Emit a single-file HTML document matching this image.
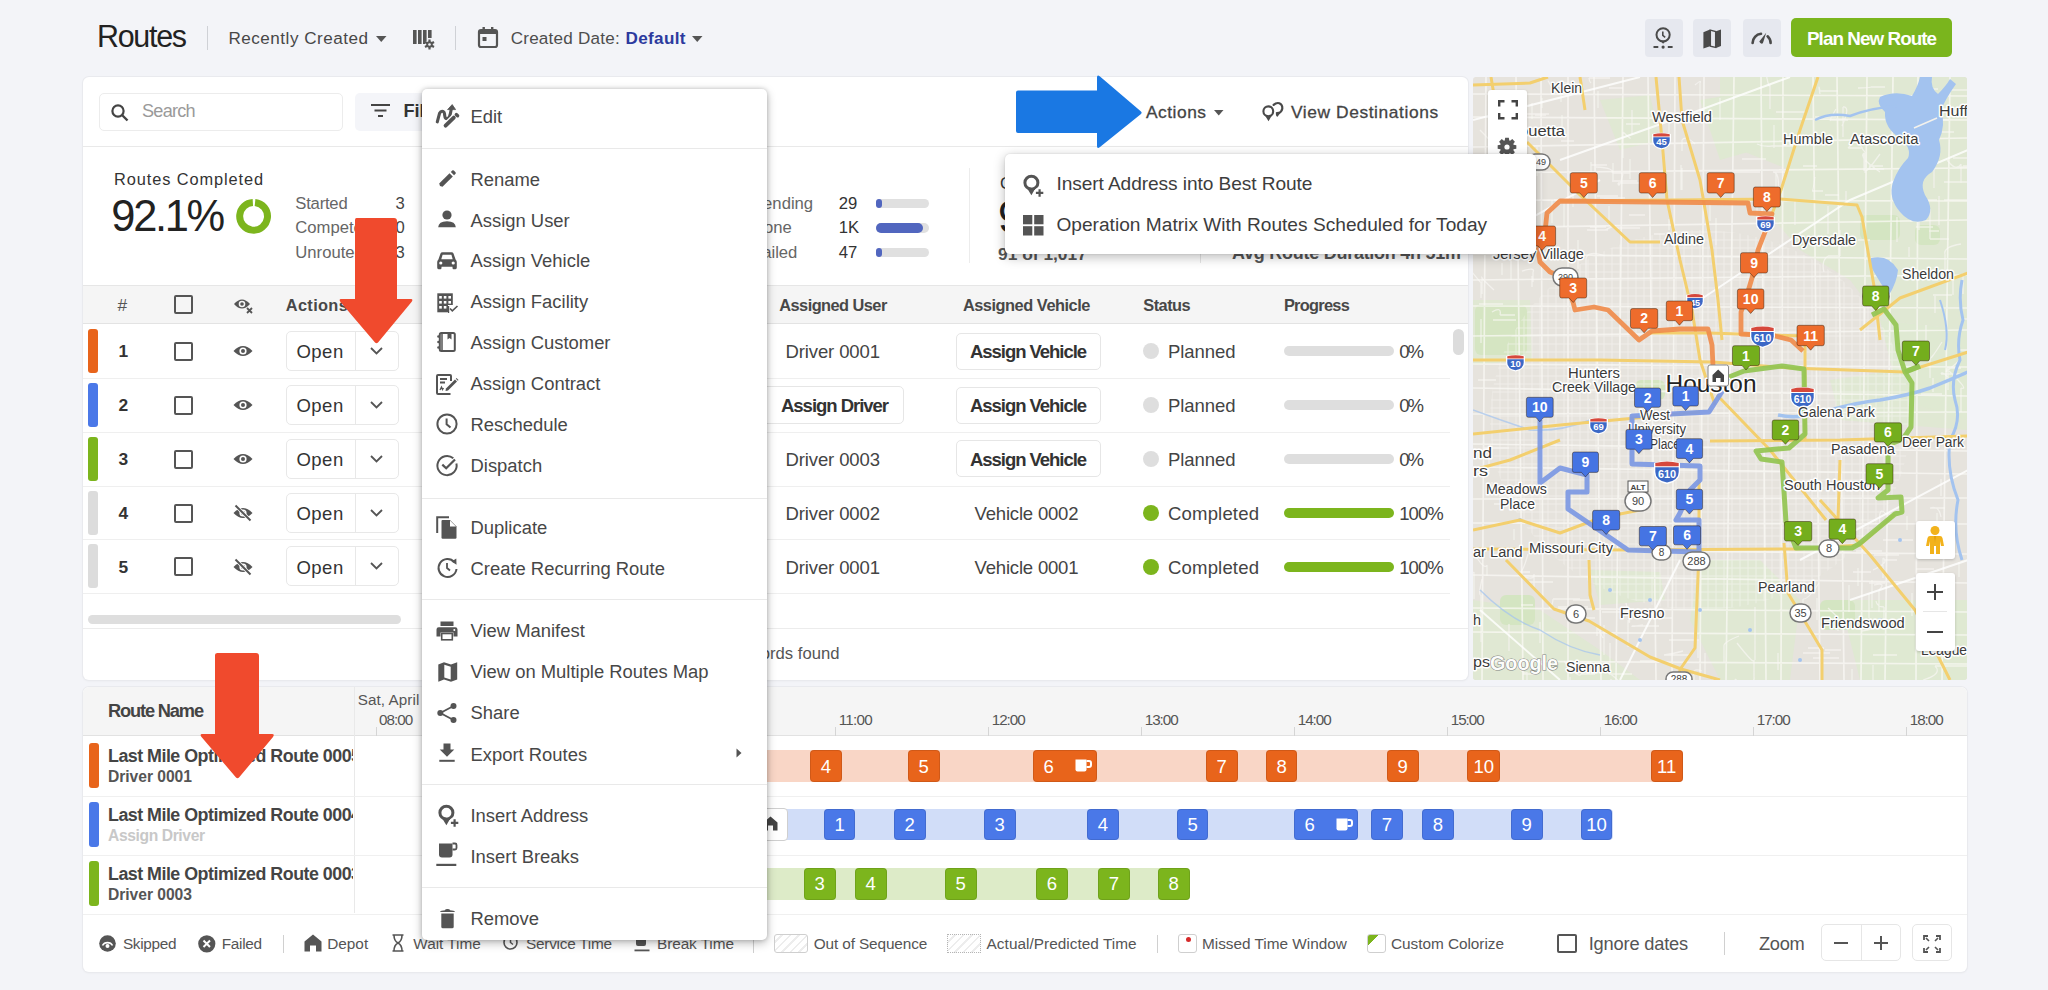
<!DOCTYPE html>
<html><head><meta charset="utf-8"><style>
html,body{margin:0;padding:0;}
body{width:2048px;height:990px;overflow:hidden;position:relative;background:#f3f4f8;font-family:"Liberation Sans",sans-serif;}
.t{position:absolute;white-space:nowrap;line-height:1.2;}
svg{overflow:visible}
</style></head><body>
<div class="t" style="left:97.0px;top:18.2px;font-size:30.43px;font-weight:400;color:#222;letter-spacing:-1.28px;">Routes</div>
<div style="position:absolute;left:207px;top:26px;width:1px;height:24px;background:#cfd1d6"></div>
<div class="t" style="left:228.5px;top:28.7px;font-size:17.1px;font-weight:400;color:#474747;letter-spacing:0.49px;">Recently Created</div>
<svg style="position:absolute;left:376px;top:36px;" width="11" height="7" viewBox="0 0 11 7"><path d="M0 0H10.5L5.25 6Z" fill="#555"/></svg>
<svg style="position:absolute;left:413px;top:29px;" width="21" height="21" viewBox="0 0 21 21"><rect x="0" y="1" width="3.6" height="14" fill="#555"/><rect x="5" y="1" width="3.6" height="14" fill="#555"/><rect x="10" y="1" width="3.6" height="14" fill="#555"/><rect x="15" y="1" width="3.6" height="8" fill="#555"/><circle cx="16.5" cy="15.5" r="4.6" fill="#f3f4f8"/><path d="M16.5 10.5V20.5M12 13L21 18M12 18L21 13" stroke="#555" stroke-width="2.2"/><circle cx="16.5" cy="15.5" r="3.2" fill="#555"/><circle cx="16.5" cy="15.5" r="1.3" fill="#f3f4f8"/></svg>
<div style="position:absolute;left:455px;top:26px;width:1px;height:24px;background:#cfd1d6"></div>
<svg style="position:absolute;left:478px;top:27px;" width="20" height="21" viewBox="0 0 20 21"><rect x="1" y="3" width="18" height="17" rx="2" fill="none" stroke="#555" stroke-width="2.2"/><rect x="1" y="3" width="18" height="4" fill="#555"/><rect x="4.5" y="0" width="2.4" height="5" fill="#555"/><rect x="13" y="0" width="2.4" height="5" fill="#555"/><rect x="4.5" y="10" width="4" height="4" fill="#555"/></svg>
<div class="t" style="left:510.7px;top:28.7px;font-size:17.1px;font-weight:400;color:#4d4d4d;letter-spacing:0.21px;">Created Date:</div>
<div class="t" style="left:625.5px;top:28.7px;font-size:17.1px;font-weight:700;color:#2c3a9e;letter-spacing:0.34px;">Default</div>
<svg style="position:absolute;left:692px;top:36px;" width="11" height="7" viewBox="0 0 11 7"><path d="M0 0H10.5L5.25 6Z" fill="#555"/></svg>
<div style="position:absolute;left:1645px;top:19px;width:38px;height:38px;background:#e6e8ef;border-radius:4px"></div>
<div style="position:absolute;left:1693px;top:19px;width:38px;height:38px;background:#e6e8ef;border-radius:4px"></div>
<div style="position:absolute;left:1743px;top:19px;width:38px;height:38px;background:#e6e8ef;border-radius:4px"></div>
<svg style="position:absolute;left:1653px;top:26px;" width="21" height="23" viewBox="0 0 21 23"><circle cx="10.1" cy="8.8" r="6.6" fill="none" stroke="#4a4a4a" stroke-width="2"/><path d="M7 14.5L10.1 17.8 13.2 14.5Z" fill="#4a4a4a"/><path d="M9.8 5.6V9.4L12.2 11.4" fill="none" stroke="#4a4a4a" stroke-width="1.6"/><path d="M0.5 21.1H5.3M14.8 21.1H19.6" stroke="#4a4a4a" stroke-width="2"/><circle cx="10.1" cy="21.1" r="1.6" fill="#4a4a4a"/></svg>
<svg style="position:absolute;left:1703px;top:28.5px;" width="19" height="20" viewBox="0 0 19 20"><path d="M0.4 3.2L7 0.6V17.2L0.4 19.6Z" fill="#4a4a4a"/><path d="M13 2.2L18 0.4V17L13 18.9Z" fill="#4a4a4a"/><path d="M7.4 1.2L12.6 2.6V18.4L7.4 17.2Z" fill="none" stroke="#4a4a4a" stroke-width="1.3"/></svg>
<svg style="position:absolute;left:1750px;top:28px;" width="24" height="18" viewBox="0 0 24 18"><path d="M2.6 15A9.2 9.2 0 0 1 11 5.8" fill="none" stroke="#4a4a4a" stroke-width="2.6" stroke-linecap="round"/><path d="M17.6 8.3A9.2 9.2 0 0 1 20.6 15" fill="none" stroke="#4a4a4a" stroke-width="2.6" stroke-linecap="round"/><path d="M9.3 13.6L16.2 4.8 12.9 15.3Q10.6 16.6 9.3 13.6Z" fill="#4a4a4a"/></svg>
<div style="position:absolute;left:1791px;top:18px;width:161px;height:39px;background:#7ab51d;border-radius:5px"></div>
<div class="t" style="left:1807.0px;top:27.6px;font-size:18.84px;font-weight:700;color:#fff;letter-spacing:-0.94px;">Plan New Route</div>
<div style="position:absolute;left:83px;top:77px;width:1385px;height:603px;background:#fff;border-radius:6px;box-shadow:0 0 0 1px #e9eaee,0 1px 3px rgba(0,0,0,.05)"></div>
<div style="position:absolute;left:99px;top:93px;width:244px;height:38px;border:1px solid #ececec;border-radius:5px;box-sizing:border-box"></div>
<svg style="position:absolute;left:111px;top:104px;" width="18" height="17" viewBox="0 0 18 17"><circle cx="7" cy="7" r="5.6" fill="none" stroke="#444" stroke-width="2.2"/><path d="M11 11L16.5 16.5" stroke="#444" stroke-width="2.4"/></svg>
<div class="t" style="left:142.0px;top:100.9px;font-size:18.12px;font-weight:400;color:#9a9a9a;letter-spacing:-0.76px;">Search</div>
<div style="position:absolute;left:355px;top:93px;width:115px;height:38px;background:#f4f5f9;border-radius:5px"></div>
<svg style="position:absolute;left:371px;top:104px;" width="19" height="14" viewBox="0 0 19 14"><path d="M0 1H19M3.5 6.5H15.5M7 12H12" stroke="#444" stroke-width="2"/></svg>
<div class="t" style="left:403.5px;top:100.9px;font-size:18.12px;font-weight:700;color:#333;letter-spacing:0.00px;">Filters</div>
<div style="position:absolute;left:83px;top:146px;width:1385px;height:1px;background:#e9e9e9"></div>
<div class="t" style="left:1146.0px;top:102.3px;font-size:17.39px;font-weight:400;color:#444;letter-spacing:0.50px;-webkit-text-stroke:0.3px #444">Actions</div>
<svg style="position:absolute;left:1214px;top:110px;" width="10" height="6" viewBox="0 0 10 6"><path d="M0 0H9.5L4.75 5.5Z" fill="#555"/></svg>
<svg style="position:absolute;left:1255px;top:97px;" width="35" height="30" viewBox="0 0 35 30"><circle cx="13.3" cy="14.3" r="4.9" fill="none" stroke="#4a4a4a" stroke-width="2.1"/><path d="M8.8 16.6L13.5 24.2 18 16.6Q13.4 21 8.8 16.6Z" fill="#4a4a4a"/><path d="M18.6 7.9Q21.3 5.4 24.3 6.2Q27.6 7.6 27.3 11.6Q26.8 14.8 23.4 16.4" fill="none" stroke="#4a4a4a" stroke-width="2.2" stroke-linecap="round"/><path d="M20.9 15.3Q23 14.5 25.6 15.2L22.8 19.6Q20.6 20.3 20.9 15.3Z" fill="#4a4a4a"/></svg>
<div class="t" style="left:1291.0px;top:102.3px;font-size:17.39px;font-weight:400;color:#444;letter-spacing:0.58px;-webkit-text-stroke:0.3px #444">View Destinations</div>
<div class="t" style="left:114.0px;top:170.0px;font-size:16.38px;font-weight:400;color:#333;letter-spacing:0.90px;">Routes Completed</div>
<div class="t" style="left:111.3px;top:190.3px;font-size:43.48px;font-weight:400;color:#222;letter-spacing:-2.32px;">92.1%</div>
<svg style="position:absolute;left:236px;top:199px;" width="36" height="36" viewBox="0 0 36 36"><circle cx="17.6" cy="17.3" r="13.9" fill="none" stroke="#7cb51d" stroke-width="7" stroke-dasharray="84.5 3" transform="rotate(-84 17.6 17.3)"/></svg>
<div class="t" style="left:295.3px;top:193.8px;font-size:16.67px;font-weight:400;color:#666;letter-spacing:-0.22px;">Started</div>
<div class="t" style="left:395.4px;top:193.8px;font-size:16.67px;font-weight:400;color:#444;letter-spacing:0.00px;">3</div>
<div class="t" style="left:295.3px;top:218.2px;font-size:16.67px;font-weight:400;color:#666;letter-spacing:0.00px;">Competed</div>
<div class="t" style="left:395.4px;top:218.2px;font-size:16.67px;font-weight:400;color:#444;letter-spacing:0.00px;">0</div>
<div class="t" style="left:295.3px;top:242.6px;font-size:16.67px;font-weight:400;color:#666;letter-spacing:0.00px;">Unrouted</div>
<div class="t" style="left:395.4px;top:242.6px;font-size:16.67px;font-weight:400;color:#444;letter-spacing:0.00px;">3</div>
<div class="t" style="left:752.0px;top:193.8px;font-size:16.67px;font-weight:400;color:#666;letter-spacing:0.00px;">Pending</div>
<div class="t" style="left:838.8px;top:193.8px;font-size:16.67px;font-weight:400;color:#333;letter-spacing:0.00px;">29</div>
<div style="position:absolute;left:875.6px;top:198.9px;width:53.799999999999955px;height:9.399999999999977px;background:#e0e0e0;border-radius:5px"></div>
<div style="position:absolute;left:875.6px;top:198.9px;width:6.0px;height:9.399999999999977px;background:#5166bf;border-radius:5px"></div>
<div class="t" style="left:752.0px;top:218.2px;font-size:16.67px;font-weight:400;color:#666;letter-spacing:0.00px;">Done</div>
<div class="t" style="left:838.8px;top:218.2px;font-size:16.67px;font-weight:400;color:#333;letter-spacing:0.00px;">1K</div>
<div style="position:absolute;left:875.6px;top:223.3px;width:53.799999999999955px;height:9.399999999999977px;background:#e0e0e0;border-radius:5px"></div>
<div style="position:absolute;left:875.6px;top:223.3px;width:47.0px;height:9.399999999999977px;background:#5166bf;border-radius:5px"></div>
<div class="t" style="left:752.0px;top:242.6px;font-size:16.67px;font-weight:400;color:#666;letter-spacing:0.00px;">Failed</div>
<div class="t" style="left:838.8px;top:242.6px;font-size:16.67px;font-weight:400;color:#333;letter-spacing:0.00px;">47</div>
<div style="position:absolute;left:875.6px;top:247.7px;width:53.799999999999955px;height:9.399999999999977px;background:#e0e0e0;border-radius:5px"></div>
<div style="position:absolute;left:875.6px;top:247.7px;width:6.0px;height:9.399999999999977px;background:#5166bf;border-radius:5px"></div>
<div style="position:absolute;left:968.5px;top:168px;width:1.0px;height:95px;background:#ececec"></div>
<div class="t" style="left:1000.0px;top:173.8px;font-size:16.67px;font-weight:400;color:#333;letter-spacing:0.00px;">Completed Destinations</div>
<div class="t" style="left:998.0px;top:191.3px;font-size:43.48px;font-weight:400;color:#222;letter-spacing:0.00px;">91.1%</div>
<div class="t" style="left:998.0px;top:243.9px;font-size:17.39px;font-weight:700;color:#555;letter-spacing:0.00px;">91 of 1,017</div>
<div style="position:absolute;left:1200px;top:248px;width:1px;height:15px;background:#e5e5e5"></div>
<div class="t" style="left:1232.0px;top:243.3px;font-size:17.97px;font-weight:700;color:#555;letter-spacing:-0.24px;">Avg Route Duration 4h 51m</div>
<div style="position:absolute;left:83px;top:285px;width:1385px;height:38.5px;background:#f5f5f5;border-top:1px solid #e6e6e6;border-bottom:1px solid #e3e3e3;box-sizing:border-box"></div>
<div class="t" style="left:117.6px;top:295.1px;font-size:17.39px;font-weight:400;color:#555;letter-spacing:0.00px;">#</div>
<div style="position:absolute;left:173.5px;top:295px;width:19.0px;height:19px;border:2px solid #555;border-radius:2px;box-sizing:border-box"></div>
<svg style="position:absolute;left:233px;top:296px;" width="21" height="18" viewBox="0 0 21 18"><path d="M1 8Q9 -1 17 8Q9 17 1 8Z" fill="#555"/><circle cx="9" cy="8" r="3.3" fill="#f5f5f5"/><circle cx="9" cy="8" r="1.8" fill="#555"/><path d="M14 12L19 17M19 12L14 17" stroke="#555" stroke-width="1.8"/></svg>
<div class="t" style="left:285.8px;top:296.0px;font-size:16.38px;font-weight:700;color:#484848;letter-spacing:0.33px;">Actions</div>
<div class="t" style="left:779.3px;top:296.0px;font-size:16.38px;font-weight:700;color:#484848;letter-spacing:-0.55px;">Assigned User</div>
<div class="t" style="left:962.9px;top:296.0px;font-size:16.38px;font-weight:700;color:#484848;letter-spacing:-0.47px;">Assigned Vehicle</div>
<div class="t" style="left:1143.3px;top:296.0px;font-size:16.38px;font-weight:700;color:#484848;letter-spacing:-0.52px;">Status</div>
<div class="t" style="left:1283.9px;top:296.0px;font-size:16.38px;font-weight:700;color:#484848;letter-spacing:-0.71px;">Progress</div>
<div style="position:absolute;left:83px;top:377.85px;width:1367px;height:1.0px;background:#efefef"></div>
<div style="position:absolute;left:88px;top:329.0px;width:10px;height:44.0px;background:#e8641b;border-radius:3px"></div>
<div class="t" style="left:118.6px;top:341.4px;font-size:17.39px;font-weight:700;color:#333;letter-spacing:0.00px;">1</div>
<div style="position:absolute;left:174px;top:342.0px;width:19px;height:19.0px;border:2px solid #555;border-radius:2px;box-sizing:border-box"></div>
<svg style="position:absolute;left:233px;top:343.3px;" width="20" height="16" viewBox="0 0 20 16"><path d="M0.5 8Q10 -2 19.5 8Q10 18 0.5 8Z" fill="#555"/><circle cx="10" cy="8" r="3.6" fill="#fff"/><circle cx="10" cy="8" r="2" fill="#555"/></svg>
<div style="position:absolute;left:286px;top:331.0px;width:112.5px;height:40.0px;border:1px solid #e8e8e8;border-radius:5px;box-sizing:border-box"></div>
<div style="position:absolute;left:355px;top:331.0px;width:1px;height:40.0px;background:#e8e8e8"></div>
<div class="t" style="left:296.5px;top:341.3px;font-size:18.55px;font-weight:400;color:#333;letter-spacing:0.45px;">Open</div>
<svg style="position:absolute;left:370px;top:347.0px;" width="13" height="8" viewBox="0 0 13 8"><path d="M1 1L6.5 6.5 12 1" fill="none" stroke="#555" stroke-width="1.8"/></svg>
<div class="t" style="left:785.5px;top:341.3px;font-size:18.55px;font-weight:400;color:#444;letter-spacing:-0.13px;">Driver 0001</div>
<div style="position:absolute;left:955.6px;top:332.7px;width:145.10000000000002px;height:37.10000000000002px;border:1px solid #e6e6e6;border-radius:5px;box-sizing:border-box"></div>
<div class="t" style="left:970.0px;top:341.3px;font-size:18.55px;font-weight:700;color:#333;letter-spacing:-1.06px;">Assign Vehicle</div>
<div style="position:absolute;left:1143px;top:343.3px;width:16px;height:16.0px;background:#dedede;border-radius:50%"></div>
<div class="t" style="left:1168.0px;top:341.3px;font-size:18.55px;font-weight:400;color:#444;letter-spacing:-0.07px;">Planned</div>
<div style="position:absolute;left:1283.6px;top:346.3px;width:110.20000000000005px;height:10.0px;background:#dedede;border-radius:5px"></div>
<div class="t" style="left:1399.3px;top:341.3px;font-size:18.55px;font-weight:400;color:#444;letter-spacing:-2.10px;">0%</div>
<div style="position:absolute;left:83px;top:431.70000000000005px;width:1367px;height:1.0px;background:#efefef"></div>
<div style="position:absolute;left:88px;top:382.85px;width:10px;height:44.0px;background:#4a78e8;border-radius:3px"></div>
<div class="t" style="left:118.6px;top:395.2px;font-size:17.39px;font-weight:700;color:#333;letter-spacing:0.00px;">2</div>
<div style="position:absolute;left:174px;top:395.85px;width:19px;height:19.0px;border:2px solid #555;border-radius:2px;box-sizing:border-box"></div>
<svg style="position:absolute;left:233px;top:397.15000000000003px;" width="20" height="16" viewBox="0 0 20 16"><path d="M0.5 8Q10 -2 19.5 8Q10 18 0.5 8Z" fill="#555"/><circle cx="10" cy="8" r="3.6" fill="#fff"/><circle cx="10" cy="8" r="2" fill="#555"/></svg>
<div style="position:absolute;left:286px;top:384.85px;width:112.5px;height:40.0px;border:1px solid #e8e8e8;border-radius:5px;box-sizing:border-box"></div>
<div style="position:absolute;left:355px;top:384.85px;width:1px;height:40.0px;background:#e8e8e8"></div>
<div class="t" style="left:296.5px;top:395.1px;font-size:18.55px;font-weight:400;color:#333;letter-spacing:0.45px;">Open</div>
<svg style="position:absolute;left:370px;top:400.85px;" width="13" height="8" viewBox="0 0 13 8"><path d="M1 1L6.5 6.5 12 1" fill="none" stroke="#555" stroke-width="1.8"/></svg>
<div style="position:absolute;left:740px;top:386.35px;width:163.60000000000002px;height:37.89999999999998px;border:1px solid #e6e6e6;border-radius:5px;box-sizing:border-box;background:#fff"></div>
<div class="t" style="left:781.0px;top:395.1px;font-size:18.55px;font-weight:700;color:#333;letter-spacing:-1.04px;">Assign Driver</div>
<div style="position:absolute;left:955.6px;top:386.55px;width:145.10000000000002px;height:37.10000000000002px;border:1px solid #e6e6e6;border-radius:5px;box-sizing:border-box"></div>
<div class="t" style="left:970.0px;top:395.1px;font-size:18.55px;font-weight:700;color:#333;letter-spacing:-1.06px;">Assign Vehicle</div>
<div style="position:absolute;left:1143px;top:397.15000000000003px;width:16px;height:16.0px;background:#dedede;border-radius:50%"></div>
<div class="t" style="left:1168.0px;top:395.1px;font-size:18.55px;font-weight:400;color:#444;letter-spacing:-0.07px;">Planned</div>
<div style="position:absolute;left:1283.6px;top:400.15000000000003px;width:110.20000000000005px;height:10.0px;background:#dedede;border-radius:5px"></div>
<div class="t" style="left:1399.3px;top:395.1px;font-size:18.55px;font-weight:400;color:#444;letter-spacing:-2.10px;">0%</div>
<div style="position:absolute;left:83px;top:485.55px;width:1367px;height:1.0px;background:#efefef"></div>
<div style="position:absolute;left:88px;top:436.7px;width:10px;height:44.0px;background:#7cb51d;border-radius:3px"></div>
<div class="t" style="left:118.6px;top:449.1px;font-size:17.39px;font-weight:700;color:#333;letter-spacing:0.00px;">3</div>
<div style="position:absolute;left:174px;top:449.7px;width:19px;height:19.0px;border:2px solid #555;border-radius:2px;box-sizing:border-box"></div>
<svg style="position:absolute;left:233px;top:451.0px;" width="20" height="16" viewBox="0 0 20 16"><path d="M0.5 8Q10 -2 19.5 8Q10 18 0.5 8Z" fill="#555"/><circle cx="10" cy="8" r="3.6" fill="#fff"/><circle cx="10" cy="8" r="2" fill="#555"/></svg>
<div style="position:absolute;left:286px;top:438.7px;width:112.5px;height:40.0px;border:1px solid #e8e8e8;border-radius:5px;box-sizing:border-box"></div>
<div style="position:absolute;left:355px;top:438.7px;width:1px;height:40.0px;background:#e8e8e8"></div>
<div class="t" style="left:296.5px;top:449.0px;font-size:18.55px;font-weight:400;color:#333;letter-spacing:0.45px;">Open</div>
<svg style="position:absolute;left:370px;top:454.7px;" width="13" height="8" viewBox="0 0 13 8"><path d="M1 1L6.5 6.5 12 1" fill="none" stroke="#555" stroke-width="1.8"/></svg>
<div class="t" style="left:785.5px;top:449.0px;font-size:18.55px;font-weight:400;color:#444;letter-spacing:-0.13px;">Driver 0003</div>
<div style="position:absolute;left:955.6px;top:440.4px;width:145.10000000000002px;height:37.10000000000002px;border:1px solid #e6e6e6;border-radius:5px;box-sizing:border-box"></div>
<div class="t" style="left:970.0px;top:449.0px;font-size:18.55px;font-weight:700;color:#333;letter-spacing:-1.06px;">Assign Vehicle</div>
<div style="position:absolute;left:1143px;top:451.0px;width:16px;height:16.0px;background:#dedede;border-radius:50%"></div>
<div class="t" style="left:1168.0px;top:449.0px;font-size:18.55px;font-weight:400;color:#444;letter-spacing:-0.07px;">Planned</div>
<div style="position:absolute;left:1283.6px;top:454.0px;width:110.20000000000005px;height:10.0px;background:#dedede;border-radius:5px"></div>
<div class="t" style="left:1399.3px;top:449.0px;font-size:18.55px;font-weight:400;color:#444;letter-spacing:-2.10px;">0%</div>
<div style="position:absolute;left:83px;top:539.4px;width:1367px;height:1.0px;background:#efefef"></div>
<div style="position:absolute;left:88px;top:490.55px;width:10px;height:43.99999999999994px;background:#dcdcdc;border-radius:3px"></div>
<div class="t" style="left:118.6px;top:502.9px;font-size:17.39px;font-weight:700;color:#333;letter-spacing:0.00px;">4</div>
<div style="position:absolute;left:174px;top:503.55px;width:19px;height:18.999999999999943px;border:2px solid #555;border-radius:2px;box-sizing:border-box"></div>
<svg style="position:absolute;left:233px;top:503.85px;" width="20" height="18" viewBox="0 0 20 18"><path d="M0.5 9Q10 -1 19.5 9Q10 19 0.5 9Z" fill="#555"/><circle cx="10" cy="9" r="3.6" fill="#fff"/><circle cx="10" cy="9" r="2" fill="#555"/><path d="M2.5 1.5L17.5 16.5" stroke="#fff" stroke-width="3.5"/><path d="M2.5 1.5L17.5 16.5" stroke="#555" stroke-width="2"/></svg>
<div style="position:absolute;left:286px;top:492.55px;width:112.5px;height:39.99999999999994px;border:1px solid #e8e8e8;border-radius:5px;box-sizing:border-box"></div>
<div style="position:absolute;left:355px;top:492.55px;width:1px;height:39.99999999999994px;background:#e8e8e8"></div>
<div class="t" style="left:296.5px;top:502.8px;font-size:18.55px;font-weight:400;color:#333;letter-spacing:0.45px;">Open</div>
<svg style="position:absolute;left:370px;top:508.55px;" width="13" height="8" viewBox="0 0 13 8"><path d="M1 1L6.5 6.5 12 1" fill="none" stroke="#555" stroke-width="1.8"/></svg>
<div class="t" style="left:785.5px;top:502.8px;font-size:18.55px;font-weight:400;color:#444;letter-spacing:-0.13px;">Driver 0002</div>
<div class="t" style="left:974.5px;top:502.8px;font-size:18.55px;font-weight:400;color:#444;letter-spacing:-0.19px;">Vehicle 0002</div>
<div style="position:absolute;left:1143px;top:504.85px;width:16px;height:16.0px;background:#7cb51d;border-radius:50%"></div>
<div class="t" style="left:1168.0px;top:502.8px;font-size:18.55px;font-weight:400;color:#444;letter-spacing:0.17px;">Completed</div>
<div style="position:absolute;left:1283.6px;top:507.85px;width:110.20000000000005px;height:10.0px;background:#7cb51d;border-radius:5px"></div>
<div class="t" style="left:1399.3px;top:502.8px;font-size:18.55px;font-weight:400;color:#444;letter-spacing:-1.00px;">100%</div>
<div style="position:absolute;left:83px;top:593.25px;width:1367px;height:1.0px;background:#efefef"></div>
<div style="position:absolute;left:88px;top:544.4px;width:10px;height:44.0px;background:#dcdcdc;border-radius:3px"></div>
<div class="t" style="left:118.6px;top:556.8px;font-size:17.39px;font-weight:700;color:#333;letter-spacing:0.00px;">5</div>
<div style="position:absolute;left:174px;top:557.4px;width:19px;height:19.0px;border:2px solid #555;border-radius:2px;box-sizing:border-box"></div>
<svg style="position:absolute;left:233px;top:557.6999999999999px;" width="20" height="18" viewBox="0 0 20 18"><path d="M0.5 9Q10 -1 19.5 9Q10 19 0.5 9Z" fill="#555"/><circle cx="10" cy="9" r="3.6" fill="#fff"/><circle cx="10" cy="9" r="2" fill="#555"/><path d="M2.5 1.5L17.5 16.5" stroke="#fff" stroke-width="3.5"/><path d="M2.5 1.5L17.5 16.5" stroke="#555" stroke-width="2"/></svg>
<div style="position:absolute;left:286px;top:546.4px;width:112.5px;height:40.0px;border:1px solid #e8e8e8;border-radius:5px;box-sizing:border-box"></div>
<div style="position:absolute;left:355px;top:546.4px;width:1px;height:40.0px;background:#e8e8e8"></div>
<div class="t" style="left:296.5px;top:556.7px;font-size:18.55px;font-weight:400;color:#333;letter-spacing:0.45px;">Open</div>
<svg style="position:absolute;left:370px;top:562.4px;" width="13" height="8" viewBox="0 0 13 8"><path d="M1 1L6.5 6.5 12 1" fill="none" stroke="#555" stroke-width="1.8"/></svg>
<div class="t" style="left:785.5px;top:556.7px;font-size:18.55px;font-weight:400;color:#444;letter-spacing:-0.13px;">Driver 0001</div>
<div class="t" style="left:974.5px;top:556.7px;font-size:18.55px;font-weight:400;color:#444;letter-spacing:-0.19px;">Vehicle 0001</div>
<div style="position:absolute;left:1143px;top:558.6999999999999px;width:16px;height:16.0px;background:#7cb51d;border-radius:50%"></div>
<div class="t" style="left:1168.0px;top:556.7px;font-size:18.55px;font-weight:400;color:#444;letter-spacing:0.17px;">Completed</div>
<div style="position:absolute;left:1283.6px;top:561.6999999999999px;width:110.20000000000005px;height:10.0px;background:#7cb51d;border-radius:5px"></div>
<div class="t" style="left:1399.3px;top:556.7px;font-size:18.55px;font-weight:400;color:#444;letter-spacing:-1.00px;">100%</div>
<div style="position:absolute;left:1452.7px;top:329px;width:10.899999999999864px;height:26px;background:#dcdcdc;border-radius:6px"></div>
<div style="position:absolute;left:88px;top:614.6px;width:313px;height:9.100000000000023px;background:#dedede;border-radius:5px"></div>
<div style="position:absolute;left:83px;top:628px;width:1385px;height:1px;background:#ececec"></div>
<div class="t" style="left:691.3px;top:643.8px;font-size:16.67px;font-weight:400;color:#555;letter-spacing:0.00px;">5 of 5 records found</div>
<svg style="position:absolute;left:1473px;top:77px;border-radius:3px;overflow:hidden" width="494" height="603" viewBox="1473 77 494 603"><rect x="1473" y="77" width="494" height="603" fill="#e6e3dd"/><polygon points="1600,100 1650,95 1660,140 1620,150" fill="#e0e8d3"/><polygon points="1720,77 1968,77 1968,330 1880,320 1850,280 1800,250 1770,215 1790,170 1740,150 1720,110" fill="#e0e8d3"/><polygon points="1473,300 1530,300 1532,360 1473,365" fill="#e0e8d3"/><polygon points="1473,600 1540,610 1600,650 1640,680 1473,680" fill="#e0e8d3"/><polygon points="1700,560 1760,560 1800,600 1790,680 1720,680 1690,620" fill="#e0e8d3"/><polygon points="1830,380 1968,360 1968,430 1840,420" fill="#e0e8d3"/><polygon points="1590,570 1660,572 1665,600 1600,605" fill="#e0e8d3"/><polygon points="1880,320 1968,330 1968,420 1900,400" fill="#dfe9d2"/><polygon points="1840,600 1968,600 1968,680 1860,680" fill="#dfe9d2"/><polygon points="1700,100 1760,90 1790,140 1720,160" fill="#dfe9d2"/><rect x="1475" y="305" width="52" height="50" rx="6" fill="#d5e5c2"/><rect x="1860" y="215" width="40" height="25" rx="6" fill="#d5e5c2"/><rect x="1915" y="225" width="25" height="20" rx="6" fill="#d5e5c2"/><rect x="1635" y="380" width="30" height="20" rx="6" fill="#d5e5c2"/><rect x="1820" y="600" width="35" height="30" rx="6" fill="#d5e5c2"/><rect x="1500" y="595" width="35" height="30" rx="6" fill="#d5e5c2"/><defs><clipPath id="core"><ellipse cx="1700" cy="420" rx="210" ry="190"/></clipPath></defs><path d="M1476 77V680 M1484 77V680 M1492 77V680 M1500 77V680 M1508 77V680 M1516 77V680 M1524 77V680 M1532 77V680 M1540 77V680 M1548 77V680 M1556 77V680 M1564 77V680 M1572 77V680 M1580 77V680 M1588 77V680 M1596 77V680 M1604 77V680 M1612 77V680 M1620 77V680 M1628 77V680 M1636 77V680 M1644 77V680 M1652 77V680 M1660 77V680 M1668 77V680 M1676 77V680 M1684 77V680 M1692 77V680 M1700 77V680 M1708 77V680 M1716 77V680 M1724 77V680 M1732 77V680 M1740 77V680 M1748 77V680 M1756 77V680 M1764 77V680 M1772 77V680 M1780 77V680 M1788 77V680 M1796 77V680 M1804 77V680 M1812 77V680 M1820 77V680 M1828 77V680 M1836 77V680 M1844 77V680 M1852 77V680 M1860 77V680 M1868 77V680 M1876 77V680 M1884 77V680 M1892 77V680 M1900 77V680 M1908 77V680 M1916 77V680 M1924 77V680 M1932 77V680 M1940 77V680 M1948 77V680 M1956 77V680 M1964 77V680 M1473 80H1968 M1473 88H1968 M1473 96H1968 M1473 104H1968 M1473 112H1968 M1473 120H1968 M1473 128H1968 M1473 136H1968 M1473 144H1968 M1473 152H1968 M1473 160H1968 M1473 168H1968 M1473 176H1968 M1473 184H1968 M1473 192H1968 M1473 200H1968 M1473 208H1968 M1473 216H1968 M1473 224H1968 M1473 232H1968 M1473 240H1968 M1473 248H1968 M1473 256H1968 M1473 264H1968 M1473 272H1968 M1473 280H1968 M1473 288H1968 M1473 296H1968 M1473 304H1968 M1473 312H1968 M1473 320H1968 M1473 328H1968 M1473 336H1968 M1473 344H1968 M1473 352H1968 M1473 360H1968 M1473 368H1968 M1473 376H1968 M1473 384H1968 M1473 392H1968 M1473 400H1968 M1473 408H1968 M1473 416H1968 M1473 424H1968 M1473 432H1968 M1473 440H1968 M1473 448H1968 M1473 456H1968 M1473 464H1968 M1473 472H1968 M1473 480H1968 M1473 488H1968 M1473 496H1968 M1473 504H1968 M1473 512H1968 M1473 520H1968 M1473 528H1968 M1473 536H1968 M1473 544H1968 M1473 552H1968 M1473 560H1968 M1473 568H1968 M1473 576H1968 M1473 584H1968 M1473 592H1968 M1473 600H1968 M1473 608H1968 M1473 616H1968 M1473 624H1968 M1473 632H1968 M1473 640H1968 M1473 648H1968 M1473 656H1968 M1473 664H1968 M1473 672H1968" stroke="#f8f7f3" stroke-width="1" opacity="0.55" clip-path="url(#core)"/><path d="M1930 358v20 M1930 358q0 3 12 -16 M1623 132v26 M1623 132q10 9 6 5 M1551 86h21 M1551 86q-5 -9 -1 -2 M1611 679v30 M1629 215h16 M1664 655h27 M1664 655q8 -1 19 -4 M1858 240h12 M1848 148h15 M1848 148q6 -6 2 -2 M1578 240v29 M1911 204v18 M1523 674h14 M1509 131h22 M1948 369v21 M1948 369q-7 8 13 -10 M1939 196v29 M1682 140v11 M1682 140q4 -5 13 4 M1618 183h24 M1618 183q1 7 5 -9 M1927 200h10 M1503 183v17 M1503 183q-3 8 19 6 M1542 98v10 M1950 90h23 M1631 680v12 M1919 521v24 M1919 602v18 M1774 125v23 M1514 529v11 M1929 231h10 M1573 179v28 M1914 274h23 M1872 628h28 M1630 159v20 M1825 650h16 M1609 206v18 M1959 350h11 M1494 504h21 M1482 159h19 M1591 162v11 M1873 655h24 M1561 83v19 M1561 83q-5 -3 8 1 M1922 130v29 M1922 130q-1 3 16 -5 M1755 607v26 M1795 201v24 M1828 206v28 M1632 626h27 M1632 626q-1 1 11 -1 M1487 565v11 M1487 565q-3 6 -14 -14 M1941 374h29 M1941 374q1 -4 9 6 M1919 203v27 M1757 198v21 M1487 662h20 M1815 117h21 M1930 239h19 M1877 620h20 M1877 620q2 9 -15 11 M1484 194v15 M1597 196h21 M1552 200v23 M1897 217v25 M1930 209v30 M1930 209q-5 5 -10 -16 M1864 153v18 M1864 153q-6 4 16 19 M1812 191h11 M1812 191q1 0 3 -14 M1564 200v27 M1520 114h29 M1770 85v24 M1770 85q-1 5 -4 -12 M1481 616v26 M1959 562v15 M1858 568v18 M1831 120h17 M1831 120q-3 3 5 -11 M1941 479v17 M1968 464v24 M1484 448h25 M1498 195h18 M1498 195q8 1 0 19 M1754 677v23 M1754 677q2 5 -18 17 M1776 112h29 M1828 256h10 M1828 256q-7 5 -4 16 M1843 107v30 M1843 107q8 -1 -1 19 M1937 513v19 M1772 146h22 M1772 146q-9 1 -15 -2 M1736 679v29 M1736 679q-8 8 11 5 M1846 191v15 M1908 101h11 M1782 139h21 M1782 139q4 1 5 -5 M1710 204v17 M1510 149v26 M1963 273v21 M1521 605h12 M1511 206h23 M1613 163v17 M1755 631v29 M1871 261h16 M1916 227h17 M1909 247v10 M1754 660v23 M1754 660q1 6 -17 -17 M1838 619v12 M1838 619q5 3 -10 -11 M1640 661h23 M1926 325v27 M1872 580v28 M1681 165v25 M1556 200h18 M1502 263v12 M1562 115v19 M1491 143h14 M1491 143q4 2 -11 -13 M1612 181h25 M1602 612h28 M1947 368h14 M1609 674h23 M1609 674q-1 -3 12 9 M1773 172h13 M1773 172q7 0 5 20 M1474 572v27 M1474 572q-5 4 -16 -1 M1705 653v22 M1927 132h27 M1733 172h27 M1511 261v19 M1813 141h18 M1479 304h24 M1700 83v30 M1700 83q2 -4 -5 2 M1600 198h25 M1519 162v12 M1518 214h13 M1509 632v19 M1853 572h18 M1481 319v24 M1482 277v17 M1482 277q-2 0 12 13 M1776 172v25 M1961 388v24 M1961 388q9 3 -12 -17 M1933 295h19 M1540 622v21 M1604 625v30 M1534 574v16 M1534 574q1 7 -13 2 M1511 96v14 M1871 87h14 M1871 87q-2 1 -13 1 M1492 482v13 M1713 677v27 M1921 394h21 M1632 110v25 M1508 152v19 M1499 496h21 M1669 219v11 M1803 599v18 M1803 599q5 1 16 -16 M1865 152v21 M1865 152q-5 -4 -7 -17 M1916 569h18 M1496 96h28 M1935 666h19 M1935 666q8 8 -12 14 M1558 607h30 M1568 608h11 M1628 620v27 M1628 620q4 9 -2 -17 M1825 195h14 M1864 302v23 M1586 258v29 M1586 258q3 -8 19 -2 M1614 228h26 M1614 228q5 -5 -9 2 M1565 618h30 M1933 378v14 M1944 182h26 M1856 551h26 M1720 98v22 M1905 186h13 M1509 624v21 M1591 165h16 M1517 572h13 M1517 572q4 7 11 -18 M1580 662h11 M1961 164v19 M1961 164q-5 8 -14 -4 M1511 98v30 M1587 230h21 M1935 296v17 M1493 320h23 M1817 598v22 M1554 200h14 M1694 676v24 M1694 676q-2 -9 8 -5 M1609 88h14 M1930 508h15 M1930 508q9 -3 11 9 M1922 89h16 M1922 89q8 -3 11 1 M1500 315h15 M1500 315q2 -9 -8 -3 M1742 159h24 M1803 166h14 M1902 213h16 M1902 213q-9 -10 5 3 M1873 665v16 M1803 653h27 M1667 113h18 M1612 173h18 M1612 173q3 -5 -16 -6 M1682 168v22 M1820 91h18 M1820 91q-2 -9 -0 3 M1598 91v17 M1778 653v17 M1884 607v18 M1884 607q-7 0 -8 -6 M1957 167h14 M1589 78h21 M1589 78q-0 3 2 5 M1953 278v17 M1813 658h26 M1590 227h16 M1535 115h11 M1553 599h27 M1553 599q0 6 -4 9 M1849 585v27 M1884 560h13 M1587 188v10 M1953 158h24 M1669 640h30 M1532 103v16 M1532 276v11 M1869 583h16 M1852 669v18 M1869 166h14 M1533 272v10 M1533 272q3 -5 -11 -1 M1654 234h11 M1626 124h14 M1573 600h20 M1669 112v21 M1610 643v27 M1886 514h14 M1886 514q-8 -9 -6 10 M1478 204h29 M1874 555h25 M1883 540h30 M1597 626v10 M1597 626q-2 -3 6 12 M1921 271h12 M1561 141h13 M1478 380h18 M1944 200h28 M1527 672v19 M1527 672q-2 4 -13 -9 M1808 648h16 M1963 166h23 M1912 593v23 M1529 582h24 M1489 455v19 M1934 169v19 M1963 319h27 M1716 218v27 M1883 558v20 M1883 558q7 4 -10 12 M1901 195v16 M1901 195q1 6 -0 -10 M1869 593v25 M1867 169h17 M1867 169q-3 7 13 -15 M1919 120h30 M1907 516v14 M1481 282v16 M1481 282q2 4 -13 -15 M1537 147v29 M1570 677v24 M1724 645v17 M1724 645q2 -4 15 -9 M1698 640v18 M1695 116h18 M1945 254v24 M1945 254q-2 -7 16 -10 M1879 590v22 M1879 590q8 -8 -5 -5 M1643 618h29 M1953 666h30 M1967 117h19 M1581 674h14 M1581 674q-2 5 -17 -13 M1840 230v26 M1481 595v29 M1481 595q-3 1 1 -16 M1864 259h20" stroke="#f8f7f3" stroke-width="1.3" fill="none" opacity="0.7"/><path d="M1486 77L1482 680 M1516 77L1523 680 M1541 77L1543 680 M1568 77L1568 680 M1594 77L1601 680 M1623 77L1616 680 M1648 77L1656 680 M1675 77L1672 680 M1704 77L1700 680 M1734 77L1726 680 M1761 77L1766 680 M1783 77L1781 680 M1813 77L1820 680 M1837 77L1844 680 M1867 77L1861 680 M1893 77L1885 680 M1918 77L1916 680 M1950 77L1942 680 M1473 94L1968 96 M1473 117L1968 120 M1473 147L1968 138 M1473 173L1968 168 M1473 200L1968 201 M1473 228L1968 220 M1473 254L1968 259 M1473 280L1968 275 M1473 306L1968 308 M1473 336L1968 330 M1473 364L1968 367 M1473 388L1968 396 M1473 414L1968 412 M1473 444L1968 451 M1473 467L1968 474 M1473 499L1968 498 M1473 523L1968 524 M1473 549L1968 554 M1473 575L1968 583 M1473 608L1968 612 M1473 632L1968 635 M1473 661L1968 664" stroke="#fbfaf6" stroke-width="1.7" opacity="0.72"/><polyline points="1473,120 1640,77" fill="none" stroke="#fff" stroke-width="2" opacity="0.8"/><polyline points="1560,160 1700,110 1790,77" fill="none" stroke="#fff" stroke-width="2" opacity="0.8"/><polyline points="1700,300 1850,200 1968,150" fill="none" stroke="#fff" stroke-width="2" opacity="0.8"/><polyline points="1473,250 1600,180" fill="none" stroke="#fff" stroke-width="2" opacity="0.8"/><polyline points="1800,560 1968,470" fill="none" stroke="#fff" stroke-width="2" opacity="0.8"/><polyline points="1620,680 1680,560" fill="none" stroke="#fff" stroke-width="2" opacity="0.8"/><polyline points="1850,600 1968,560" fill="none" stroke="#fff" stroke-width="2" opacity="0.8"/><polyline points="1480,610 1560,680" fill="none" stroke="#fff" stroke-width="2" opacity="0.8"/><path d="M1880 97Q1895 90 1912 96Q1918 86 1920 77H1932Q1930 88 1938 94Q1946 86 1950 79L1956 84Q1946 98 1941 110Q1946 125 1939 140Q1944 156 1932 172Q1918 180 1925 195Q1935 210 1926 220Q1912 226 1900 212Q1888 198 1893 182Q1898 168 1908 158Q1912 148 1900 138Q1884 128 1885 112Q1876 104 1880 97Z" fill="#a3c3ef"/><path d="M1914 128L1937 118" stroke="#f4f2ec" stroke-width="1.5"/><path d="M1815 120Q1830 112 1850 116Q1870 108 1897 106" fill="none" stroke="#a3c3ef" stroke-width="2.5"/><path d="M1871 258Q1889 254 1898 270Q1897 282 1889 295Q1880 283 1874 272Q1869 264 1871 258Z" fill="#a3c3ef"/><path d="M1778 415Q1800 420 1830 410Q1860 402 1880 400Q1910 395 1930 388Q1950 380 1968 372" fill="none" stroke="#a3c3ef" stroke-width="3.5"/><path d="M1962 280Q1958 300 1963 320Q1956 340 1960 360Q1950 380 1955 400Q1962 420 1950 440Q1946 470 1958 500Q1952 530 1962 560" fill="none" stroke="#a3c3ef" stroke-width="3"/><path d="M1940 300Q1950 330 1945 350" fill="none" stroke="#a3c3ef" stroke-width="2"/><path d="M1473 410Q1500 420 1530 430Q1560 432 1590 420" fill="none" stroke="#a3c3ef" stroke-width="1.5" opacity="0.7"/><path d="M1480 590Q1510 620 1540 630Q1570 650 1600 655" fill="none" stroke="#a3c3ef" stroke-width="1.5" opacity="0.7"/><circle cx="1610" cy="590" r="2" fill="#a3c3ef"/><circle cx="1650" cy="600" r="2" fill="#a3c3ef"/><circle cx="1700" cy="610" r="2" fill="#a3c3ef"/><circle cx="1750" cy="630" r="2" fill="#a3c3ef"/><circle cx="1800" cy="660" r="2" fill="#a3c3ef"/><circle cx="1880" cy="620" r="2" fill="#a3c3ef"/><circle cx="1640" cy="640" r="2" fill="#a3c3ef"/><circle cx="1520" cy="520" r="2" fill="#a3c3ef"/><circle cx="1900" cy="540" r="2" fill="#a3c3ef"/><polyline points="1473,85 1530,83 1548,77" fill="none" stroke="#f3cf6e" stroke-width="3" stroke-linejoin="round"/><polyline points="1491,77 1494,95" fill="none" stroke="#f3cf6e" stroke-width="3" stroke-linejoin="round"/><polyline points="1527,142 1580,195 1630,242 1660,242" fill="none" stroke="#f3cf6e" stroke-width="3" stroke-linejoin="round"/><polyline points="1656,77 1662,140 1667,200 1680,260 1692,310 1700,360 1715,405" fill="none" stroke="#f3cf6e" stroke-width="3" stroke-linejoin="round"/><polyline points="1679,77 1682,120 1700,180 1712,250 1718,300 1722,340" fill="none" stroke="#f3cf6e" stroke-width="3" stroke-linejoin="round"/><polyline points="1818,77 1800,130 1781,190 1772,214" fill="none" stroke="#f3cf6e" stroke-width="3" stroke-linejoin="round"/><polyline points="1560,201 1780,199 1857,205 1862,217 1874,286 1880,340" fill="none" stroke="#f3cf6e" stroke-width="3" stroke-linejoin="round"/><polyline points="1860,330 1900,298 1968,273" fill="none" stroke="#f3cf6e" stroke-width="3" stroke-linejoin="round"/><polyline points="1473,360 1600,360 1713,362 1790,368 1905,372 1968,352" fill="none" stroke="#f3cf6e" stroke-width="3" stroke-linejoin="round"/><polyline points="1473,434 1560,425 1636,418 1700,412" fill="none" stroke="#f3cf6e" stroke-width="3" stroke-linejoin="round"/><polyline points="1650,333 1708,333 1805,336 1805,440" fill="none" stroke="#f3cf6e" stroke-width="3" stroke-linejoin="round"/><polyline points="1699,480 1699,552 1695,648 1681,668 1676,680" fill="none" stroke="#f3cf6e" stroke-width="3" stroke-linejoin="round"/><polyline points="1473,549 1628,550 1796,549 1860,545 1895,514" fill="none" stroke="#f3cf6e" stroke-width="3" stroke-linejoin="round"/><polyline points="1506,560 1554,609 1589,621 1650,657 1681,669 1720,680" fill="none" stroke="#f3cf6e" stroke-width="3" stroke-linejoin="round"/><polyline points="1473,530 1520,520 1560,533 1600,518 1640,510" fill="none" stroke="#f3cf6e" stroke-width="3" stroke-linejoin="round"/><polyline points="1784,543 1788,593 1822,650 1822,680" fill="none" stroke="#f3cf6e" stroke-width="3" stroke-linejoin="round"/><polyline points="1820,500 1870,555 1915,610 1950,680" fill="none" stroke="#f3cf6e" stroke-width="3" stroke-linejoin="round"/><polyline points="1473,470 1510,460 1560,440" fill="none" stroke="#f3cf6e" stroke-width="3" stroke-linejoin="round"/><polyline points="1710,441 1840,440 1968,436" fill="none" stroke="#f3cf6e" stroke-width="3" stroke-linejoin="round"/><polyline points="1717,395 1770,450 1826,520" fill="none" stroke="#f3cf6e" stroke-width="3" stroke-linejoin="round"/><polyline points="1840,460 1838,520" fill="none" stroke="#f3cf6e" stroke-width="3" stroke-linejoin="round"/><polyline points="1580,77 1585,110" fill="none" stroke="#f3cf6e" stroke-width="3" stroke-linejoin="round"/><polyline points="1589,560 1590,595 1594,610" fill="none" stroke="#f3cf6e" stroke-width="3" stroke-linejoin="round"/><polyline points="1803,351 1791,340 1775,336 1741,334 1741,312 1746,298 1752,278 1758,250 1772,214 1750,213 1748,203 1560,201 1547,213 1545,232 1538,250 1540,262 1550,272 1563,277 1573,302 1575,310 1594,307 1608,310 1639,340 1652,331 1680,329 1708,329 1712,345 1713,366 1717,376" fill="none" stroke="#f08a48" stroke-width="4.8" stroke-linejoin="round" opacity="0.9"/><polyline points="1723,390 1709,412 1671,414 1632,416 1632,464 1700,466 1700,480 1690,490 1680,513 1676,520 1699,520 1699,552 1628,550 1593,526 1568,509 1568,492 1587,492 1587,475 1560,468 1540,483 1540,420" fill="none" stroke="#7c98e3" stroke-width="5" stroke-linejoin="round" opacity="0.92"/><polyline points="1729,377 1744,371 1782,366 1804,369 1805,434 1789,448 1756,451 1761,459 1782,462 1786,522 1796,548 1852,548 1859,544 1895,514 1902,512 1901,497 1878,498 1888,490 1888,445 1903,439 1911,427 1912,383 1905,372 1898,350 1896,325 1884,309 1872,315" fill="none" stroke="#92c451" stroke-width="5" stroke-linejoin="round" opacity="0.92"/><polyline points="1905,372 1920,366" fill="none" stroke="#92c451" stroke-width="5.5"/><path d="M1652 134.0976Q1661.5 131.3008 1671 134.0976V140.74Q1671 147.3824 1661.5 149.48Q1652 147.3824 1652 140.74Z" fill="#fff"/><path d="M1653.3 137.244H1669.7V140.74Q1669.7 146.6832 1661.5 148.17999999999998Q1653.3 146.6832 1653.3 140.74Z" fill="#3b68c6"/><path d="M1653.3 134.2724Q1661.5 132 1669.7 134.2724V136.5448H1653.3Z" fill="#d6483c"/><text x="1661.5" y="145.2848" font-size="9.5" font-weight="700" fill="#fff" text-anchor="middle" font-family="Liberation Sans">45</text><path d="M1756 217.0976Q1765.5 214.3008 1775 217.0976V223.74Q1775 230.3824 1765.5 232.48Q1756 230.3824 1756 223.74Z" fill="#fff"/><path d="M1757.3 220.244H1773.7V223.74Q1773.7 229.6832 1765.5 231.17999999999998Q1757.3 229.6832 1757.3 223.74Z" fill="#3b68c6"/><path d="M1757.3 217.2724Q1765.5 215 1773.7 217.2724V219.5448H1757.3Z" fill="#d6483c"/><text x="1765.5" y="228.2848" font-size="9.5" font-weight="700" fill="#fff" text-anchor="middle" font-family="Liberation Sans">69</text><path d="M1506 356.0976Q1515.5 353.3008 1525 356.0976V362.74Q1525 369.3824 1515.5 371.48Q1506 369.3824 1506 362.74Z" fill="#fff"/><path d="M1507.3 359.244H1523.7V362.74Q1523.7 368.6832 1515.5 370.18Q1507.3 368.6832 1507.3 362.74Z" fill="#3b68c6"/><path d="M1507.3 356.2724Q1515.5 354 1523.7 356.2724V358.5448H1507.3Z" fill="#d6483c"/><text x="1515.5" y="367.2848" font-size="9.5" font-weight="700" fill="#fff" text-anchor="middle" font-family="Liberation Sans">10</text><path d="M1589 419.0976Q1598.5 416.3008 1608 419.0976V425.74Q1608 432.3824 1598.5 434.48Q1589 432.3824 1589 425.74Z" fill="#fff"/><path d="M1590.3 422.244H1606.7V425.74Q1606.7 431.6832 1598.5 433.18Q1590.3 431.6832 1590.3 425.74Z" fill="#3b68c6"/><path d="M1590.3 419.2724Q1598.5 417 1606.7 419.2724V421.5448H1590.3Z" fill="#d6483c"/><text x="1598.5" y="430.2848" font-size="9.5" font-weight="700" fill="#fff" text-anchor="middle" font-family="Liberation Sans">69</text><path d="M1790 388.76Q1802.5 385.08 1815 388.76V397.5Q1815 406.24 1802.5 409.0Q1790 406.24 1790 397.5Z" fill="#fff"/><path d="M1791.3 392.9H1813.7V397.5Q1813.7 405.32 1802.5 407.7Q1791.3 405.32 1791.3 397.5Z" fill="#3b68c6"/><path d="M1791.3 388.99Q1802.5 386 1813.7 388.99V391.98H1791.3Z" fill="#d6483c"/><text x="1802.5" y="403.48" font-size="10.5" font-weight="700" fill="#fff" text-anchor="middle" font-family="Liberation Sans">610</text><path d="M1654 462.8704Q1667.0 459.0432 1680 462.8704V471.96Q1680 481.0496 1667.0 483.92Q1654 481.0496 1654 471.96Z" fill="#fff"/><path d="M1655.3 467.176H1678.7V471.96Q1678.7 480.0928 1667.0 482.62Q1655.3 480.0928 1655.3 471.96Z" fill="#3b68c6"/><path d="M1655.3 463.1096Q1667.0 460 1678.7 463.1096V466.2192H1655.3Z" fill="#d6483c"/><text x="1667.0" y="478.1792" font-size="10.92" font-weight="700" fill="#fff" text-anchor="middle" font-family="Liberation Sans">610</text><path d="M1750 327.76Q1762.5 324.08 1775 327.76V336.5Q1775 345.24 1762.5 348.0Q1750 345.24 1750 336.5Z" fill="#fff"/><path d="M1751.3 331.9H1773.7V336.5Q1773.7 344.32 1762.5 346.7Q1751.3 344.32 1751.3 336.5Z" fill="#3b68c6"/><path d="M1751.3 327.99Q1762.5 325 1773.7 327.99V330.98H1751.3Z" fill="#d6483c"/><text x="1762.5" y="342.48" font-size="10.5" font-weight="700" fill="#fff" text-anchor="middle" font-family="Liberation Sans">610</text><path d="M1686 294.9872Q1695.0 292.3376 1704 294.9872V301.28Q1704 307.57280000000003 1695.0 309.56Q1686 307.57280000000003 1686 301.28Z" fill="#fff"/><path d="M1687.3 297.968H1702.7V301.28Q1702.7 306.9104 1695.0 308.26Q1687.3 306.9104 1687.3 301.28Z" fill="#3b68c6"/><path d="M1687.3 295.1528Q1695.0 293 1702.7 295.1528V297.3056H1687.3Z" fill="#d6483c"/><text x="1695.0" y="305.5856" font-size="9.0" font-weight="700" fill="#fff" text-anchor="middle" font-family="Liberation Sans">45</text><rect x="1683" y="552" width="27" height="18" rx="9.0" fill="#fff" stroke="#777" stroke-width="1.5"/><text x="1696.5" y="564.96" font-size="11" fill="#444" text-anchor="middle" font-family="Liberation Sans">288</text><rect x="1652" y="545" width="19" height="15" rx="7.5" fill="#fff" stroke="#777" stroke-width="1.5"/><text x="1661.5" y="556.1" font-size="10" fill="#444" text-anchor="middle" font-family="Liberation Sans">8</text><rect x="1566" y="605" width="20" height="18" rx="9.0" fill="#fff" stroke="#777" stroke-width="1.5"/><text x="1576.0" y="617.96" font-size="11" fill="#444" text-anchor="middle" font-family="Liberation Sans">6</text><rect x="1790" y="604" width="21" height="18" rx="9.0" fill="#fff" stroke="#777" stroke-width="1.5"/><text x="1800.5" y="616.96" font-size="11" fill="#444" text-anchor="middle" font-family="Liberation Sans">35</text><rect x="1819" y="540" width="20" height="17" rx="8.5" fill="#fff" stroke="#777" stroke-width="1.5"/><text x="1829.0" y="552.46" font-size="11" fill="#444" text-anchor="middle" font-family="Liberation Sans">8</text><rect x="1863" y="288" width="26" height="17" rx="8.5" fill="#fff" stroke="#777" stroke-width="1.5"/><text x="1876.0" y="300.46" font-size="11" fill="#444" text-anchor="middle" font-family="Liberation Sans">90</text><rect x="1625" y="491" width="26" height="20" rx="10.0" fill="#fff" stroke="#777" stroke-width="1.5"/><text x="1638.0" y="504.96" font-size="11" fill="#444" text-anchor="middle" font-family="Liberation Sans">90</text><rect x="1666" y="672" width="26" height="14" rx="7.0" fill="#fff" stroke="#777" stroke-width="1.5"/><text x="1679.0" y="682.6" font-size="10" fill="#444" text-anchor="middle" font-family="Liberation Sans">288</text><rect x="1527" y="154" width="23" height="16" rx="8.0" fill="#fff" stroke="#777" stroke-width="1.5"/><text x="1538.5" y="165.24" font-size="9" fill="#444" text-anchor="middle" font-family="Liberation Sans">249</text><rect x="1553" y="268" width="25" height="18" rx="9.0" fill="#fff" stroke="#777" stroke-width="1.5"/><text x="1565.5" y="280.24" font-size="9" fill="#444" text-anchor="middle" font-family="Liberation Sans">290</text><rect x="1628" y="481" width="20" height="11" fill="#fff" stroke="#555" stroke-width="1"/><text x="1638" y="490" font-size="8" font-weight="700" fill="#444" text-anchor="middle" font-family="Liberation Sans">ALT</text><text x="1551" y="93.3" font-size="15.5" font-weight="400" fill="#3a3a3a" font-family="Liberation Sans" stroke="#fff" stroke-width="3" stroke-linejoin="round" paint-order="stroke" textLength="31" lengthAdjust="spacingAndGlyphs">Klein</text><text x="1519" y="136.3" font-size="15.5" font-weight="400" fill="#3a3a3a" font-family="Liberation Sans" stroke="#fff" stroke-width="3" stroke-linejoin="round" paint-order="stroke" textLength="46" lengthAdjust="spacingAndGlyphs">ouetta</text><text x="1652" y="122.3" font-size="15.5" font-weight="400" fill="#3a3a3a" font-family="Liberation Sans" stroke="#fff" stroke-width="3" stroke-linejoin="round" paint-order="stroke" textLength="60" lengthAdjust="spacingAndGlyphs">Westfield</text><text x="1783" y="144.3" font-size="15.5" font-weight="400" fill="#3a3a3a" font-family="Liberation Sans" stroke="#fff" stroke-width="3" stroke-linejoin="round" paint-order="stroke" textLength="50" lengthAdjust="spacingAndGlyphs">Humble</text><text x="1850" y="144.3" font-size="15.5" font-weight="400" fill="#3a3a3a" font-family="Liberation Sans" stroke="#fff" stroke-width="3" stroke-linejoin="round" paint-order="stroke" textLength="68.5" lengthAdjust="spacingAndGlyphs">Atascocita</text><text x="1939" y="116.3" font-size="15.5" font-weight="400" fill="#3a3a3a" font-family="Liberation Sans" stroke="#fff" stroke-width="3" stroke-linejoin="round" paint-order="stroke" textLength="29" lengthAdjust="spacingAndGlyphs">Huff</text><text x="1664" y="244.3" font-size="15.5" font-weight="400" fill="#3a3a3a" font-family="Liberation Sans" stroke="#fff" stroke-width="3" stroke-linejoin="round" paint-order="stroke" textLength="40" lengthAdjust="spacingAndGlyphs">Aldine</text><text x="1493" y="259.3" font-size="15.5" font-weight="400" fill="#3a3a3a" font-family="Liberation Sans" stroke="#fff" stroke-width="3" stroke-linejoin="round" paint-order="stroke" textLength="91" lengthAdjust="spacingAndGlyphs">Jersey Village</text><text x="1792" y="245.3" font-size="15.5" font-weight="400" fill="#3a3a3a" font-family="Liberation Sans" stroke="#fff" stroke-width="3" stroke-linejoin="round" paint-order="stroke" textLength="64" lengthAdjust="spacingAndGlyphs">Dyersdale</text><text x="1902" y="279.3" font-size="15.5" font-weight="400" fill="#3a3a3a" font-family="Liberation Sans" stroke="#fff" stroke-width="3" stroke-linejoin="round" paint-order="stroke" textLength="52" lengthAdjust="spacingAndGlyphs">Sheldon</text><text x="1568" y="377.8" font-size="15.5" font-weight="400" fill="#3a3a3a" font-family="Liberation Sans" stroke="#fff" stroke-width="3" stroke-linejoin="round" paint-order="stroke" textLength="52" lengthAdjust="spacingAndGlyphs">Hunters</text><text x="1552" y="391.7" font-size="15.5" font-weight="400" fill="#3a3a3a" font-family="Liberation Sans" stroke="#fff" stroke-width="3" stroke-linejoin="round" paint-order="stroke" textLength="84" lengthAdjust="spacingAndGlyphs">Creek Village</text><text x="1798" y="417.3" font-size="15.5" font-weight="400" fill="#3a3a3a" font-family="Liberation Sans" stroke="#fff" stroke-width="3" stroke-linejoin="round" paint-order="stroke" textLength="77" lengthAdjust="spacingAndGlyphs">Galena Park</text><text x="1831" y="453.90000000000003" font-size="15.5" font-weight="400" fill="#3a3a3a" font-family="Liberation Sans" stroke="#fff" stroke-width="3" stroke-linejoin="round" paint-order="stroke" textLength="64" lengthAdjust="spacingAndGlyphs">Pasadena</text><text x="1902" y="446.7" font-size="15.5" font-weight="400" fill="#3a3a3a" font-family="Liberation Sans" stroke="#fff" stroke-width="3" stroke-linejoin="round" paint-order="stroke" textLength="62" lengthAdjust="spacingAndGlyphs">Deer Park</text><text x="1784" y="490.3" font-size="15.5" font-weight="400" fill="#3a3a3a" font-family="Liberation Sans" stroke="#fff" stroke-width="3" stroke-linejoin="round" paint-order="stroke" textLength="96" lengthAdjust="spacingAndGlyphs">South Houston</text><text x="1486" y="494.0" font-size="15.5" font-weight="400" fill="#3a3a3a" font-family="Liberation Sans" stroke="#fff" stroke-width="3" stroke-linejoin="round" paint-order="stroke" textLength="61" lengthAdjust="spacingAndGlyphs">Meadows</text><text x="1500" y="509.1" font-size="15.5" font-weight="400" fill="#3a3a3a" font-family="Liberation Sans" stroke="#fff" stroke-width="3" stroke-linejoin="round" paint-order="stroke" textLength="35" lengthAdjust="spacingAndGlyphs">Place</text><text x="1473" y="457.90000000000003" font-size="15.5" font-weight="400" fill="#3a3a3a" font-family="Liberation Sans" stroke="#fff" stroke-width="3" stroke-linejoin="round" paint-order="stroke" textLength="19" lengthAdjust="spacingAndGlyphs">nd</text><text x="1473" y="476.3" font-size="15.5" font-weight="400" fill="#3a3a3a" font-family="Liberation Sans" stroke="#fff" stroke-width="3" stroke-linejoin="round" paint-order="stroke" textLength="15" lengthAdjust="spacingAndGlyphs">rs</text><text x="1529" y="552.9" font-size="15.5" font-weight="400" fill="#3a3a3a" font-family="Liberation Sans" stroke="#fff" stroke-width="3" stroke-linejoin="round" paint-order="stroke" textLength="84" lengthAdjust="spacingAndGlyphs">Missouri City</text><text x="1473" y="556.6999999999999" font-size="15.5" font-weight="400" fill="#3a3a3a" font-family="Liberation Sans" stroke="#fff" stroke-width="3" stroke-linejoin="round" paint-order="stroke" textLength="49.5" lengthAdjust="spacingAndGlyphs">ar Land</text><text x="1758" y="592.3" font-size="15.5" font-weight="400" fill="#3a3a3a" font-family="Liberation Sans" stroke="#fff" stroke-width="3" stroke-linejoin="round" paint-order="stroke" textLength="57" lengthAdjust="spacingAndGlyphs">Pearland</text><text x="1620" y="618.3" font-size="15.5" font-weight="400" fill="#3a3a3a" font-family="Liberation Sans" stroke="#fff" stroke-width="3" stroke-linejoin="round" paint-order="stroke" textLength="44.5" lengthAdjust="spacingAndGlyphs">Fresno</text><text x="1821" y="627.6999999999999" font-size="15.5" font-weight="400" fill="#3a3a3a" font-family="Liberation Sans" stroke="#fff" stroke-width="3" stroke-linejoin="round" paint-order="stroke" textLength="83.7" lengthAdjust="spacingAndGlyphs">Friendswood</text><text x="1566" y="671.5999999999999" font-size="15.5" font-weight="400" fill="#3a3a3a" font-family="Liberation Sans" stroke="#fff" stroke-width="3" stroke-linejoin="round" paint-order="stroke" textLength="44" lengthAdjust="spacingAndGlyphs">Sienna</text><text x="1921" y="654.8" font-size="15.5" font-weight="400" fill="#3a3a3a" font-family="Liberation Sans" stroke="#fff" stroke-width="3" stroke-linejoin="round" paint-order="stroke" textLength="46" lengthAdjust="spacingAndGlyphs">League</text><text x="1473" y="625.3" font-size="15.5" font-weight="400" fill="#3a3a3a" font-family="Liberation Sans" stroke="#fff" stroke-width="3" stroke-linejoin="round" paint-order="stroke" textLength="8" lengthAdjust="spacingAndGlyphs">h</text><text x="1473" y="667.3" font-size="15.5" font-weight="400" fill="#3a3a3a" font-family="Liberation Sans" stroke="#fff" stroke-width="3" stroke-linejoin="round" paint-order="stroke" textLength="17" lengthAdjust="spacingAndGlyphs">ps</text><text x="1640" y="420.3" font-size="15.5" font-weight="400" fill="#3a3a3a" font-family="Liberation Sans" stroke="#fff" stroke-width="3" stroke-linejoin="round" paint-order="stroke" textLength="30" lengthAdjust="spacingAndGlyphs">West</text><text x="1628" y="434.3" font-size="15.5" font-weight="400" fill="#3a3a3a" font-family="Liberation Sans" stroke="#fff" stroke-width="3" stroke-linejoin="round" paint-order="stroke" textLength="58" lengthAdjust="spacingAndGlyphs">University</text><text x="1650" y="449.3" font-size="15.5" font-weight="400" fill="#3a3a3a" font-family="Liberation Sans" stroke="#fff" stroke-width="3" stroke-linejoin="round" paint-order="stroke" textLength="30" lengthAdjust="spacingAndGlyphs">Place</text><text x="1665.5" y="392" font-size="24" font-weight="400" fill="#222" font-family="Liberation Sans" stroke="#fff" stroke-width="3" stroke-linejoin="round" paint-order="stroke" textLength="91" lengthAdjust="spacingAndGlyphs">Houston</text><path d="M1572.3 172.7H1595.3Q1597.3 172.7 1597.3 174.7V191Q1597.3 193 1595.3 193H1587.8L1583.8 197.5L1579.8 193H1572.3Q1570.3 193 1570.3 191V174.7Q1570.3 172.7 1572.3 172.7Z" fill="#ee6c2c" stroke="rgba(40,20,0,.45)" stroke-width="1"/><text x="1583.8" y="187.85" font-size="14" font-weight="700" fill="#fff" text-anchor="middle" font-family="Liberation Sans">5</text><path d="M1641.2 172.7H1664Q1666 172.7 1666 174.7V191Q1666 193 1664 193H1656.6L1652.6 197.5L1648.6 193H1641.2Q1639.2 193 1639.2 191V174.7Q1639.2 172.7 1641.2 172.7Z" fill="#ee6c2c" stroke="rgba(40,20,0,.45)" stroke-width="1"/><text x="1652.6" y="187.85" font-size="14" font-weight="700" fill="#fff" text-anchor="middle" font-family="Liberation Sans">6</text><path d="M1709.2 172.7H1732.2Q1734.2 172.7 1734.2 174.7V191Q1734.2 193 1732.2 193H1724.7L1720.7 197.5L1716.7 193H1709.2Q1707.2 193 1707.2 191V174.7Q1707.2 172.7 1709.2 172.7Z" fill="#ee6c2c" stroke="rgba(40,20,0,.45)" stroke-width="1"/><text x="1720.7" y="187.85" font-size="14" font-weight="700" fill="#fff" text-anchor="middle" font-family="Liberation Sans">7</text><path d="M1755.4 187H1778.4Q1780.4 187 1780.4 189V205Q1780.4 207 1778.4 207H1770.9L1766.9 211.5L1762.9 207H1755.4Q1753.4 207 1753.4 205V189Q1753.4 187 1755.4 187Z" fill="#ee6c2c" stroke="rgba(40,20,0,.45)" stroke-width="1"/><text x="1766.9" y="202.0" font-size="14" font-weight="700" fill="#fff" text-anchor="middle" font-family="Liberation Sans">8</text><path d="M1530.6 226H1553.6Q1555.6 226 1555.6 228V244Q1555.6 246 1553.6 246H1546.1L1542.1 250.5L1538.1 246H1530.6Q1528.6 246 1528.6 244V228Q1528.6 226 1530.6 226Z" fill="#ee6c2c" stroke="rgba(40,20,0,.45)" stroke-width="1"/><text x="1542.1" y="241.0" font-size="14" font-weight="700" fill="#fff" text-anchor="middle" font-family="Liberation Sans">4</text><path d="M1561.7 278H1584.7Q1586.7 278 1586.7 280V296Q1586.7 298 1584.7 298H1577.2L1573.2 302.5L1569.2 298H1561.7Q1559.7 298 1559.7 296V280Q1559.7 278 1561.7 278Z" fill="#ee6c2c" stroke="rgba(40,20,0,.45)" stroke-width="1"/><text x="1573.2" y="293.0" font-size="14" font-weight="700" fill="#fff" text-anchor="middle" font-family="Liberation Sans">3</text><path d="M1742.5 252.7H1765.6Q1767.6 252.7 1767.6 254.7V271Q1767.6 273 1765.6 273H1758.05L1754.05 277.5L1750.05 273H1742.5Q1740.5 273 1740.5 271V254.7Q1740.5 252.7 1742.5 252.7Z" fill="#ee6c2c" stroke="rgba(40,20,0,.45)" stroke-width="1"/><text x="1754.05" y="267.85" font-size="14" font-weight="700" fill="#fff" text-anchor="middle" font-family="Liberation Sans">9</text><path d="M1739.4 289H1761.9Q1763.9 289 1763.9 291V307Q1763.9 309 1761.9 309H1754.65L1750.65 313.5L1746.65 309H1739.4Q1737.4 309 1737.4 307V291Q1737.4 289 1739.4 289Z" fill="#ee6c2c" stroke="rgba(40,20,0,.45)" stroke-width="1"/><text x="1750.65" y="304.0" font-size="14" font-weight="700" fill="#fff" text-anchor="middle" font-family="Liberation Sans">10</text><path d="M1632.5 308.6H1655.7Q1657.7 308.6 1657.7 310.6V326.3Q1657.7 328.3 1655.7 328.3H1648.1L1644.1 332.8L1640.1 328.3H1632.5Q1630.5 328.3 1630.5 326.3V310.6Q1630.5 308.6 1632.5 308.6Z" fill="#ee6c2c" stroke="rgba(40,20,0,.45)" stroke-width="1"/><text x="1644.1" y="323.45000000000005" font-size="14" font-weight="700" fill="#fff" text-anchor="middle" font-family="Liberation Sans">2</text><path d="M1668.3 301H1690.6Q1692.6 301 1692.6 303V318.7Q1692.6 320.7 1690.6 320.7H1683.4499999999998L1679.4499999999998 325.2L1675.4499999999998 320.7H1668.3Q1666.3 320.7 1666.3 318.7V303Q1666.3 301 1668.3 301Z" fill="#ee6c2c" stroke="rgba(40,20,0,.45)" stroke-width="1"/><text x="1679.4499999999998" y="315.85" font-size="14" font-weight="700" fill="#fff" text-anchor="middle" font-family="Liberation Sans">1</text><path d="M1799 325.3H1822.3Q1824.3 325.3 1824.3 327.3V343.7Q1824.3 345.7 1822.3 345.7H1814.65L1810.65 350.2L1806.65 345.7H1799Q1797 345.7 1797 343.7V327.3Q1797 325.3 1799 325.3Z" fill="#ee6c2c" stroke="rgba(40,20,0,.45)" stroke-width="1"/><text x="1810.65" y="340.5" font-size="14" font-weight="700" fill="#fff" text-anchor="middle" font-family="Liberation Sans">11</text><path d="M1636.5 388H1658.7Q1660.7 388 1660.7 390V405.3Q1660.7 407.3 1658.7 407.3H1651.6L1647.6 411.8L1643.6 407.3H1636.5Q1634.5 407.3 1634.5 405.3V390Q1634.5 388 1636.5 388Z" fill="#4574e3" stroke="rgba(40,20,0,.45)" stroke-width="1"/><text x="1647.6" y="402.65" font-size="14" font-weight="700" fill="#fff" text-anchor="middle" font-family="Liberation Sans">2</text><path d="M1674.8 386.4H1696.4Q1698.4 386.4 1698.4 388.4V404Q1698.4 406 1696.4 406H1689.6L1685.6 410.5L1681.6 406H1674.8Q1672.8 406 1672.8 404V388.4Q1672.8 386.4 1674.8 386.4Z" fill="#4574e3" stroke="rgba(40,20,0,.45)" stroke-width="1"/><text x="1685.6" y="401.2" font-size="14" font-weight="700" fill="#fff" text-anchor="middle" font-family="Liberation Sans">1</text><path d="M1528.4 397.3H1551.2Q1553.2 397.3 1553.2 399.3V415.3Q1553.2 417.3 1551.2 417.3H1543.8000000000002L1539.8000000000002 421.8L1535.8000000000002 417.3H1528.4Q1526.4 417.3 1526.4 415.3V399.3Q1526.4 397.3 1528.4 397.3Z" fill="#4574e3" stroke="rgba(40,20,0,.45)" stroke-width="1"/><text x="1539.8000000000002" y="412.3" font-size="14" font-weight="700" fill="#fff" text-anchor="middle" font-family="Liberation Sans">10</text><path d="M1627.9 429.4H1649.9Q1651.9 429.4 1651.9 431.4V447.2Q1651.9 449.2 1649.9 449.2H1642.9L1638.9 453.7L1634.9 449.2H1627.9Q1625.9 449.2 1625.9 447.2V431.4Q1625.9 429.4 1627.9 429.4Z" fill="#4574e3" stroke="rgba(40,20,0,.45)" stroke-width="1"/><text x="1638.9" y="444.29999999999995" font-size="14" font-weight="700" fill="#fff" text-anchor="middle" font-family="Liberation Sans">3</text><path d="M1678.3 438.7H1700.6Q1702.6 438.7 1702.6 440.7V456.4Q1702.6 458.4 1700.6 458.4H1693.4499999999998L1689.4499999999998 462.9L1685.4499999999998 458.4H1678.3Q1676.3 458.4 1676.3 456.4V440.7Q1676.3 438.7 1678.3 438.7Z" fill="#4574e3" stroke="rgba(40,20,0,.45)" stroke-width="1"/><text x="1689.4499999999998" y="453.54999999999995" font-size="14" font-weight="700" fill="#fff" text-anchor="middle" font-family="Liberation Sans">4</text><path d="M1574.4 452H1596.5Q1598.5 452 1598.5 454V470.4Q1598.5 472.4 1596.5 472.4H1589.45L1585.45 476.9L1581.45 472.4H1574.4Q1572.4 472.4 1572.4 470.4V454Q1572.4 452 1574.4 452Z" fill="#4574e3" stroke="rgba(40,20,0,.45)" stroke-width="1"/><text x="1585.45" y="467.2" font-size="14" font-weight="700" fill="#fff" text-anchor="middle" font-family="Liberation Sans">9</text><path d="M1678.3 489.3H1700.6Q1702.6 489.3 1702.6 491.3V507.6Q1702.6 509.6 1700.6 509.6H1693.4499999999998L1689.4499999999998 514.1L1685.4499999999998 509.6H1678.3Q1676.3 509.6 1676.3 507.6V491.3Q1676.3 489.3 1678.3 489.3Z" fill="#4574e3" stroke="rgba(40,20,0,.45)" stroke-width="1"/><text x="1689.4499999999998" y="504.45000000000005" font-size="14" font-weight="700" fill="#fff" text-anchor="middle" font-family="Liberation Sans">5</text><path d="M1594.6 510.3H1617.7Q1619.7 510.3 1619.7 512.3V528Q1619.7 530 1617.7 530H1610.15L1606.15 534.5L1602.15 530H1594.6Q1592.6 530 1592.6 528V512.3Q1592.6 510.3 1594.6 510.3Z" fill="#4574e3" stroke="rgba(40,20,0,.45)" stroke-width="1"/><text x="1606.15" y="525.15" font-size="14" font-weight="700" fill="#fff" text-anchor="middle" font-family="Liberation Sans">8</text><path d="M1641.3 526.5H1664.4Q1666.4 526.5 1666.4 528.5V543.8Q1666.4 545.8 1664.4 545.8H1656.85L1652.85 550.3L1648.85 545.8H1641.3Q1639.3 545.8 1639.3 543.8V528.5Q1639.3 526.5 1641.3 526.5Z" fill="#4574e3" stroke="rgba(40,20,0,.45)" stroke-width="1"/><text x="1652.85" y="541.15" font-size="14" font-weight="700" fill="#fff" text-anchor="middle" font-family="Liberation Sans">7</text><path d="M1675.5 525.8H1698.6Q1700.6 525.8 1700.6 527.8V542.8Q1700.6 544.8 1698.6 544.8H1691.05L1687.05 549.3L1683.05 544.8H1675.5Q1673.5 544.8 1673.5 542.8V527.8Q1673.5 525.8 1675.5 525.8Z" fill="#4574e3" stroke="rgba(40,20,0,.45)" stroke-width="1"/><text x="1687.05" y="540.3" font-size="14" font-weight="700" fill="#fff" text-anchor="middle" font-family="Liberation Sans">6</text><path d="M1864.6 286H1886.8Q1888.8 286 1888.8 288V304Q1888.8 306 1886.8 306H1879.6999999999998L1875.6999999999998 310.5L1871.6999999999998 306H1864.6Q1862.6 306 1862.6 304V288Q1862.6 286 1864.6 286Z" fill="#74ae1d" stroke="rgba(40,20,0,.45)" stroke-width="1"/><text x="1875.6999999999998" y="301.0" font-size="14" font-weight="700" fill="#fff" text-anchor="middle" font-family="Liberation Sans">8</text><path d="M1734.5 345.7H1757.5Q1759.5 345.7 1759.5 347.7V363.5Q1759.5 365.5 1757.5 365.5H1750.0L1746.0 370.0L1742.0 365.5H1734.5Q1732.5 365.5 1732.5 363.5V347.7Q1732.5 345.7 1734.5 345.7Z" fill="#74ae1d" stroke="rgba(40,20,0,.45)" stroke-width="1"/><text x="1746.0" y="360.6" font-size="14" font-weight="700" fill="#fff" text-anchor="middle" font-family="Liberation Sans">1</text><path d="M1904.3 341H1927.5Q1929.5 341 1929.5 343V358.8Q1929.5 360.8 1927.5 360.8H1919.9L1915.9 365.3L1911.9 360.8H1904.3Q1902.3 360.8 1902.3 358.8V343Q1902.3 341 1904.3 341Z" fill="#74ae1d" stroke="rgba(40,20,0,.45)" stroke-width="1"/><text x="1915.9" y="355.9" font-size="14" font-weight="700" fill="#fff" text-anchor="middle" font-family="Liberation Sans">7</text><path d="M1774.2 420H1796.7Q1798.7 420 1798.7 422V437.8Q1798.7 439.8 1796.7 439.8H1789.45L1785.45 444.3L1781.45 439.8H1774.2Q1772.2 439.8 1772.2 437.8V422Q1772.2 420 1774.2 420Z" fill="#74ae1d" stroke="rgba(40,20,0,.45)" stroke-width="1"/><text x="1785.45" y="434.9" font-size="14" font-weight="700" fill="#fff" text-anchor="middle" font-family="Liberation Sans">2</text><path d="M1876.4 422.8H1899.6Q1901.6 422.8 1901.6 424.8V440Q1901.6 442 1899.6 442H1892.0L1888.0 446.5L1884.0 442H1876.4Q1874.4 442 1874.4 440V424.8Q1874.4 422.8 1876.4 422.8Z" fill="#74ae1d" stroke="rgba(40,20,0,.45)" stroke-width="1"/><text x="1888.0" y="437.4" font-size="14" font-weight="700" fill="#fff" text-anchor="middle" font-family="Liberation Sans">6</text><path d="M1868 463.7H1891Q1893 463.7 1893 465.7V482Q1893 484 1891 484H1883.5L1879.5 488.5L1875.5 484H1868Q1866 484 1866 482V465.7Q1866 463.7 1868 463.7Z" fill="#74ae1d" stroke="rgba(40,20,0,.45)" stroke-width="1"/><text x="1879.5" y="478.85" font-size="14" font-weight="700" fill="#fff" text-anchor="middle" font-family="Liberation Sans">5</text><path d="M1786.4 521.5H1809.8Q1811.8 521.5 1811.8 523.5V539Q1811.8 541 1809.8 541H1802.1L1798.1 545.5L1794.1 541H1786.4Q1784.4 541 1784.4 539V523.5Q1784.4 521.5 1786.4 521.5Z" fill="#74ae1d" stroke="rgba(40,20,0,.45)" stroke-width="1"/><text x="1798.1" y="536.25" font-size="14" font-weight="700" fill="#fff" text-anchor="middle" font-family="Liberation Sans">3</text><path d="M1831 519H1853.7Q1855.7 519 1855.7 521V537.2Q1855.7 539.2 1853.7 539.2H1846.35L1842.35 543.7L1838.35 539.2H1831Q1829 539.2 1829 537.2V521Q1829 519 1831 519Z" fill="#74ae1d" stroke="rgba(40,20,0,.45)" stroke-width="1"/><text x="1842.35" y="534.1" font-size="14" font-weight="700" fill="#fff" text-anchor="middle" font-family="Liberation Sans">4</text><rect x="1708" y="365" width="20.5" height="21" rx="2" fill="#fff" stroke="#888" stroke-width="1"/><path d="M1718.2 369.5L1724 375V382H1720.5V378H1716V382H1712.5V375Z" fill="#444"/><text x="1490" y="670" font-size="21" font-weight="700" fill="#fff" stroke="#777" stroke-width="1.2" paint-order="stroke" font-family="Liberation Sans" textLength="68" lengthAdjust="spacingAndGlyphs" opacity="0.9">Google</text></svg>
<div style="position:absolute;left:1488px;top:90px;width:39px;height:80px;background:#fff;border-radius:3px;box-shadow:0 1px 3px rgba(0,0,0,.2)"></div>
<svg style="position:absolute;left:1497.5px;top:99.5px;" width="20" height="19.5" viewBox="0 0 20 19.5"><path d="M1.2 6.5V1.2H6.5M13.5 1.2H18.8V6.5M1.2 13V18.3H6.5M13.5 18.3H18.8V13" fill="none" stroke="#444" stroke-width="2.4"/></svg>
<svg style="position:absolute;left:1497px;top:137px;" width="20" height="20" viewBox="0 0 20 20"><polygon points="16.62,7.72 19.33,8.19 19.33,11.81 16.62,12.28 16.29,13.07 17.88,15.31 15.31,17.88 13.07,16.29 12.28,16.62 11.81,19.33 8.19,19.33 7.72,16.62 6.93,16.29 4.69,17.88 2.12,15.31 3.71,13.07 3.38,12.28 0.67,11.81 0.67,8.19 3.38,7.72 3.71,6.93 2.12,4.69 4.69,2.12 6.93,3.71 7.72,3.38 8.19,0.67 11.81,0.67 12.28,3.38 13.07,3.71 15.31,2.12 17.88,4.69 16.29,6.93" fill="#555"/><circle cx="10" cy="10" r="2.6" fill="#fff"/></svg>
<div style="position:absolute;left:1915.5px;top:520.5px;width:39.200000000000045px;height:38.89999999999998px;background:#fff;border-radius:3px;box-shadow:0 1px 3px rgba(0,0,0,.2)"></div>
<svg style="position:absolute;left:1925px;top:525px;" width="20" height="30" viewBox="0 0 20 30"><circle cx="10" cy="5.5" r="4.5" fill="#f2b21b"/><path d="M5 11H15Q17 11 17.5 13L19 21H16L15 16V29H11V21H9V29H5V16L4 21H1L2.5 13Q3 11 5 11Z" fill="#f2b21b"/><path d="M9.5 11L10 18 10.5 11Z" fill="#d08a00"/></svg>
<div style="position:absolute;left:1915.5px;top:572.9px;width:39.200000000000045px;height:78.39999999999998px;background:#fff;border-radius:3px;box-shadow:0 1px 3px rgba(0,0,0,.2)"></div>
<div style="position:absolute;left:1923px;top:611.2px;width:24px;height:1.0px;background:#e6e6e6"></div>
<div style="position:absolute;left:1927px;top:590.5px;width:16px;height:2.0px;background:#444"></div>
<div style="position:absolute;left:1934px;top:583.5px;width:2px;height:16.0px;background:#444"></div>
<div style="position:absolute;left:1927px;top:631px;width:16px;height:2px;background:#444"></div>
<div style="position:absolute;left:83px;top:687px;width:1884px;height:285px;background:#fff;border-radius:6px;box-shadow:0 0 0 1px #e9eaee,0 1px 3px rgba(0,0,0,.05)"></div>
<div style="position:absolute;left:83px;top:687px;width:1884px;height:49px;background:#f5f5f5;border-radius:6px 6px 0 0;border-bottom:1px solid #e2e2e2;box-sizing:border-box"></div>
<div class="t" style="left:108.0px;top:700.3px;font-size:18.26px;font-weight:700;color:#444;letter-spacing:-1.16px;">Route Name</div>
<div style="position:absolute;left:353.5px;top:687px;width:1.0px;height:226px;background:#e9e9e9"></div>
<div class="t" style="left:357.8px;top:690.7px;font-size:15.22px;font-weight:400;color:#555;letter-spacing:0.07px;">Sat, April</div>
<div class="t" style="left:378.9px;top:710.8px;font-size:15.22px;font-weight:400;color:#555;letter-spacing:-0.92px;">08:00</div>
<div style="position:absolute;left:376px;top:727px;width:1px;height:9px;background:#d5d5d5"></div>
<div style="position:absolute;left:529px;top:727px;width:1px;height:9px;background:#d5d5d5"></div>
<div style="position:absolute;left:682px;top:727px;width:1px;height:9px;background:#d5d5d5"></div>
<div style="position:absolute;left:835px;top:727px;width:1px;height:9px;background:#d5d5d5"></div>
<div class="t" style="left:838.8px;top:710.8px;font-size:15.22px;font-weight:400;color:#555;letter-spacing:-0.79px;">11:00</div>
<div style="position:absolute;left:988px;top:727px;width:1px;height:9px;background:#d5d5d5"></div>
<div class="t" style="left:991.8px;top:710.8px;font-size:15.22px;font-weight:400;color:#555;letter-spacing:-1.07px;">12:00</div>
<div style="position:absolute;left:1141px;top:727px;width:1px;height:9px;background:#d5d5d5"></div>
<div class="t" style="left:1144.8px;top:710.8px;font-size:15.22px;font-weight:400;color:#555;letter-spacing:-1.07px;">13:00</div>
<div style="position:absolute;left:1294px;top:727px;width:1px;height:9px;background:#d5d5d5"></div>
<div class="t" style="left:1297.8px;top:710.8px;font-size:15.22px;font-weight:400;color:#555;letter-spacing:-1.07px;">14:00</div>
<div style="position:absolute;left:1447px;top:727px;width:1px;height:9px;background:#d5d5d5"></div>
<div class="t" style="left:1450.8px;top:710.8px;font-size:15.22px;font-weight:400;color:#555;letter-spacing:-1.07px;">15:00</div>
<div style="position:absolute;left:1600px;top:727px;width:1px;height:9px;background:#d5d5d5"></div>
<div class="t" style="left:1603.8px;top:710.8px;font-size:15.22px;font-weight:400;color:#555;letter-spacing:-1.07px;">16:00</div>
<div style="position:absolute;left:1753px;top:727px;width:1px;height:9px;background:#d5d5d5"></div>
<div class="t" style="left:1756.8px;top:710.8px;font-size:15.22px;font-weight:400;color:#555;letter-spacing:-1.07px;">17:00</div>
<div style="position:absolute;left:1906px;top:727px;width:1px;height:9px;background:#d5d5d5"></div>
<div class="t" style="left:1909.8px;top:710.8px;font-size:15.22px;font-weight:400;color:#555;letter-spacing:-1.07px;">18:00</div>
<div style="position:absolute;left:83px;top:795.5px;width:1884px;height:1.0px;background:#f0f0f0"></div>
<div style="position:absolute;left:83px;top:854.5px;width:1884px;height:1.0px;background:#f0f0f0"></div>
<div style="position:absolute;left:83px;top:913.5px;width:1884px;height:1.0px;background:#f0f0f0"></div>
<div style="position:absolute;left:88.8px;top:742.6px;width:10.5px;height:45.69999999999993px;background:#e8641b;border-radius:3px"></div>
<div style="position:absolute;left:100px;top:736px;width:253px;height:58px;overflow:hidden">
<div class="t" style="left:8.0px;top:10.3px;font-size:17.83px;font-weight:700;color:#444;letter-spacing:-0.50px;">Last Mile Optimized Route 0005</div>
<div class="t" style="left:8.0px;top:32.4px;font-size:15.65px;font-weight:700;color:#555;letter-spacing:-0.04px;">Driver 0001</div>
</div>
<div style="position:absolute;left:88.8px;top:801.6px;width:10.5px;height:45.69999999999993px;background:#4a78e8;border-radius:3px"></div>
<div style="position:absolute;left:100px;top:795px;width:253px;height:58px;overflow:hidden">
<div class="t" style="left:8.0px;top:10.3px;font-size:17.83px;font-weight:700;color:#444;letter-spacing:-0.50px;">Last Mile Optimized Route 0004</div>
<div class="t" style="left:8.0px;top:32.4px;font-size:15.65px;font-weight:700;color:#c8c8c8;letter-spacing:-0.39px;">Assign Driver</div>
</div>
<div style="position:absolute;left:88.8px;top:860.6px;width:10.5px;height:45.69999999999993px;background:#7cb51d;border-radius:3px"></div>
<div style="position:absolute;left:100px;top:854px;width:253px;height:58px;overflow:hidden">
<div class="t" style="left:8.0px;top:10.3px;font-size:17.83px;font-weight:700;color:#444;letter-spacing:-0.50px;">Last Mile Optimized Route 0003</div>
<div class="t" style="left:8.0px;top:32.4px;font-size:15.65px;font-weight:700;color:#555;letter-spacing:-0.04px;">Driver 0003</div>
</div>
<div style="position:absolute;left:700px;top:750.3px;width:982.7px;height:31.5px;background:#f9d6c6;border-radius:4px"></div>
<div style="position:absolute;left:620px;top:750.3px;width:32px;height:31.5px;background:#e8641b;border-radius:4px;box-shadow:inset 0 0 0 1px rgba(0,0,0,.1)"></div>
<div class="t" style="left:630.8px;top:755.6px;font-size:18.55px;font-weight:400;color:#fff;letter-spacing:0.00px;">1</div>
<div style="position:absolute;left:680px;top:750.3px;width:32px;height:31.5px;background:#e8641b;border-radius:4px;box-shadow:inset 0 0 0 1px rgba(0,0,0,.1)"></div>
<div class="t" style="left:690.8px;top:755.6px;font-size:18.55px;font-weight:400;color:#fff;letter-spacing:0.00px;">2</div>
<div style="position:absolute;left:735px;top:750.3px;width:32px;height:31.5px;background:#e8641b;border-radius:4px;box-shadow:inset 0 0 0 1px rgba(0,0,0,.1)"></div>
<div class="t" style="left:745.8px;top:755.6px;font-size:18.55px;font-weight:400;color:#fff;letter-spacing:0.00px;">3</div>
<div style="position:absolute;left:810px;top:750.3px;width:32px;height:31.5px;background:#e8641b;border-radius:4px;box-shadow:inset 0 0 0 1px rgba(0,0,0,.1)"></div>
<div class="t" style="left:820.8px;top:755.6px;font-size:18.55px;font-weight:400;color:#fff;letter-spacing:0.00px;">4</div>
<div style="position:absolute;left:907.8px;top:750.3px;width:31.90000000000009px;height:31.5px;background:#e8641b;border-radius:4px;box-shadow:inset 0 0 0 1px rgba(0,0,0,.1)"></div>
<div class="t" style="left:918.6px;top:755.6px;font-size:18.55px;font-weight:400;color:#fff;letter-spacing:0.00px;">5</div>
<div style="position:absolute;left:1032.8px;top:750.3px;width:63.799999999999955px;height:31.5px;background:#e8641b;border-radius:4px;box-shadow:inset 0 0 0 1px rgba(0,0,0,.1)"></div>
<div class="t" style="left:1043.6px;top:755.6px;font-size:18.55px;font-weight:400;color:#fff;letter-spacing:0.00px;">6</div>
<svg style="position:absolute;left:1074.6px;top:759.3px;" width="17" height="13" viewBox="0 0 17 13"><path d="M0.5 0.5H11.5V10.5Q11.5 12.5 9.5 12.5H2.5Q0.5 12.5 0.5 10.5Z" fill="#fff"/><path d="M11.5 2H14Q16 2 16 4V6Q16 8 14 8H11.5" fill="none" stroke="#fff" stroke-width="2"/></svg>
<div style="position:absolute;left:1206px;top:750.3px;width:31.5px;height:31.5px;background:#e8641b;border-radius:4px;box-shadow:inset 0 0 0 1px rgba(0,0,0,.1)"></div>
<div class="t" style="left:1216.6px;top:755.6px;font-size:18.55px;font-weight:400;color:#fff;letter-spacing:0.00px;">7</div>
<div style="position:absolute;left:1265.6px;top:750.3px;width:31.90000000000009px;height:31.5px;background:#e8641b;border-radius:4px;box-shadow:inset 0 0 0 1px rgba(0,0,0,.1)"></div>
<div class="t" style="left:1276.4px;top:755.6px;font-size:18.55px;font-weight:400;color:#fff;letter-spacing:0.00px;">8</div>
<div style="position:absolute;left:1386.5px;top:750.3px;width:32.5px;height:31.5px;background:#e8641b;border-radius:4px;box-shadow:inset 0 0 0 1px rgba(0,0,0,.1)"></div>
<div class="t" style="left:1397.6px;top:755.6px;font-size:18.55px;font-weight:400;color:#fff;letter-spacing:0.00px;">9</div>
<div style="position:absolute;left:1467.4px;top:750.3px;width:32.59999999999991px;height:31.5px;background:#e8641b;border-radius:4px;box-shadow:inset 0 0 0 1px rgba(0,0,0,.1)"></div>
<div class="t" style="left:1473.4px;top:755.6px;font-size:18.55px;font-weight:400;color:#fff;letter-spacing:0.00px;">10</div>
<div style="position:absolute;left:1650.7px;top:750.3px;width:32.0px;height:31.5px;background:#e8641b;border-radius:4px;box-shadow:inset 0 0 0 1px rgba(0,0,0,.1)"></div>
<div class="t" style="left:1657.1px;top:755.6px;font-size:18.55px;font-weight:400;color:#fff;letter-spacing:0.00px;">11</div>
<div style="position:absolute;left:700px;top:808.8px;width:912.5px;height:31.5px;background:#d1ddf8;border-radius:4px"></div>
<div style="position:absolute;left:740px;top:808.3px;width:47.5px;height:32.5px;background:#fff;border:1px solid #cfcfcf;border-radius:4px;box-sizing:border-box"></div>
<svg style="position:absolute;left:763px;top:816px;" width="15" height="15" viewBox="0 0 15 15"><path d="M7.5 0.5L14.5 6.5V14.5H10V9.5H5V14.5H0.5V6.5Z" fill="#444"/></svg>
<div style="position:absolute;left:824px;top:808.8px;width:31.299999999999955px;height:31.5px;background:#4a78e8;border-radius:4px;box-shadow:inset 0 0 0 1px rgba(0,0,0,.1)"></div>
<div class="t" style="left:834.5px;top:814.1px;font-size:18.55px;font-weight:400;color:#fff;letter-spacing:0.00px;">1</div>
<div style="position:absolute;left:893.75px;top:808.8px;width:31.850000000000023px;height:31.5px;background:#4a78e8;border-radius:4px;box-shadow:inset 0 0 0 1px rgba(0,0,0,.1)"></div>
<div class="t" style="left:904.5px;top:814.1px;font-size:18.55px;font-weight:400;color:#fff;letter-spacing:0.00px;">2</div>
<div style="position:absolute;left:984px;top:808.8px;width:31.600000000000023px;height:31.5px;background:#4a78e8;border-radius:4px;box-shadow:inset 0 0 0 1px rgba(0,0,0,.1)"></div>
<div class="t" style="left:994.6px;top:814.1px;font-size:18.55px;font-weight:400;color:#fff;letter-spacing:0.00px;">3</div>
<div style="position:absolute;left:1087px;top:808.8px;width:31.75px;height:31.5px;background:#4a78e8;border-radius:4px;box-shadow:inset 0 0 0 1px rgba(0,0,0,.1)"></div>
<div class="t" style="left:1097.7px;top:814.1px;font-size:18.55px;font-weight:400;color:#fff;letter-spacing:0.00px;">4</div>
<div style="position:absolute;left:1177.2px;top:808.8px;width:31.200000000000045px;height:31.5px;background:#4a78e8;border-radius:4px;box-shadow:inset 0 0 0 1px rgba(0,0,0,.1)"></div>
<div class="t" style="left:1187.6px;top:814.1px;font-size:18.55px;font-weight:400;color:#fff;letter-spacing:0.00px;">5</div>
<div style="position:absolute;left:1293.75px;top:808.8px;width:63.75px;height:31.5px;background:#4a78e8;border-radius:4px;box-shadow:inset 0 0 0 1px rgba(0,0,0,.1)"></div>
<div class="t" style="left:1304.6px;top:814.1px;font-size:18.55px;font-weight:400;color:#fff;letter-spacing:0.00px;">6</div>
<svg style="position:absolute;left:1335.5px;top:817.8px;" width="17" height="13" viewBox="0 0 17 13"><path d="M0.5 0.5H11.5V10.5Q11.5 12.5 9.5 12.5H2.5Q0.5 12.5 0.5 10.5Z" fill="#fff"/><path d="M11.5 2H14Q16 2 16 4V6Q16 8 14 8H11.5" fill="none" stroke="#fff" stroke-width="2"/></svg>
<div style="position:absolute;left:1371px;top:808.8px;width:31.799999999999955px;height:31.5px;background:#4a78e8;border-radius:4px;box-shadow:inset 0 0 0 1px rgba(0,0,0,.1)"></div>
<div class="t" style="left:1381.7px;top:814.1px;font-size:18.55px;font-weight:400;color:#fff;letter-spacing:0.00px;">7</div>
<div style="position:absolute;left:1421.7px;top:808.8px;width:32.299999999999955px;height:31.5px;background:#4a78e8;border-radius:4px;box-shadow:inset 0 0 0 1px rgba(0,0,0,.1)"></div>
<div class="t" style="left:1432.7px;top:814.1px;font-size:18.55px;font-weight:400;color:#fff;letter-spacing:0.00px;">8</div>
<div style="position:absolute;left:1510.5px;top:808.8px;width:32.5px;height:31.5px;background:#4a78e8;border-radius:4px;box-shadow:inset 0 0 0 1px rgba(0,0,0,.1)"></div>
<div class="t" style="left:1521.6px;top:814.1px;font-size:18.55px;font-weight:400;color:#fff;letter-spacing:0.00px;">9</div>
<div style="position:absolute;left:1580.6px;top:808.8px;width:31.90000000000009px;height:31.5px;background:#4a78e8;border-radius:4px;box-shadow:inset 0 0 0 1px rgba(0,0,0,.1)"></div>
<div class="t" style="left:1586.2px;top:814.1px;font-size:18.55px;font-weight:400;color:#fff;letter-spacing:0.00px;">10</div>
<div style="position:absolute;left:700px;top:868px;width:489.70000000000005px;height:31.5px;background:#ddebc8;border-radius:4px"></div>
<div style="position:absolute;left:700px;top:868px;width:32px;height:31.5px;background:#7cb51d;border-radius:4px;box-shadow:inset 0 0 0 1px rgba(0,0,0,.1)"></div>
<div class="t" style="left:710.8px;top:873.3px;font-size:18.55px;font-weight:400;color:#fff;letter-spacing:0.00px;">1</div>
<div style="position:absolute;left:715px;top:868px;width:32px;height:31.5px;background:#7cb51d;border-radius:4px;box-shadow:inset 0 0 0 1px rgba(0,0,0,.1)"></div>
<div class="t" style="left:725.8px;top:873.3px;font-size:18.55px;font-weight:400;color:#fff;letter-spacing:0.00px;">2</div>
<div style="position:absolute;left:803.75px;top:868px;width:31.850000000000023px;height:31.5px;background:#7cb51d;border-radius:4px;box-shadow:inset 0 0 0 1px rgba(0,0,0,.1)"></div>
<div class="t" style="left:814.5px;top:873.3px;font-size:18.55px;font-weight:400;color:#fff;letter-spacing:0.00px;">3</div>
<div style="position:absolute;left:854.7px;top:868px;width:31.899999999999977px;height:31.5px;background:#7cb51d;border-radius:4px;box-shadow:inset 0 0 0 1px rgba(0,0,0,.1)"></div>
<div class="t" style="left:865.5px;top:873.3px;font-size:18.55px;font-weight:400;color:#fff;letter-spacing:0.00px;">4</div>
<div style="position:absolute;left:945px;top:868px;width:31.600000000000023px;height:31.5px;background:#7cb51d;border-radius:4px;box-shadow:inset 0 0 0 1px rgba(0,0,0,.1)"></div>
<div class="t" style="left:955.6px;top:873.3px;font-size:18.55px;font-weight:400;color:#fff;letter-spacing:0.00px;">5</div>
<div style="position:absolute;left:1036px;top:868px;width:31.799999999999955px;height:31.5px;background:#7cb51d;border-radius:4px;box-shadow:inset 0 0 0 1px rgba(0,0,0,.1)"></div>
<div class="t" style="left:1046.7px;top:873.3px;font-size:18.55px;font-weight:400;color:#fff;letter-spacing:0.00px;">6</div>
<div style="position:absolute;left:1098px;top:868px;width:31.700000000000045px;height:31.5px;background:#7cb51d;border-radius:4px;box-shadow:inset 0 0 0 1px rgba(0,0,0,.1)"></div>
<div class="t" style="left:1108.7px;top:873.3px;font-size:18.55px;font-weight:400;color:#fff;letter-spacing:0.00px;">7</div>
<div style="position:absolute;left:1157.8px;top:868px;width:31.90000000000009px;height:31.5px;background:#7cb51d;border-radius:4px;box-shadow:inset 0 0 0 1px rgba(0,0,0,.1)"></div>
<div class="t" style="left:1168.6px;top:873.3px;font-size:18.55px;font-weight:400;color:#fff;letter-spacing:0.00px;">8</div>
<svg style="position:absolute;left:99px;top:934.5px;" width="17" height="17" viewBox="0 0 17 17"><circle cx="8.5" cy="8.5" r="8.3" fill="#555"/><path d="M3.5 10.5A5.5 5 0 0 1 13.5 10.5" fill="none" stroke="#fff" stroke-width="1.6"/><circle cx="8.5" cy="11" r="2" fill="#fff"/></svg>
<div class="t" style="left:122.9px;top:935.0px;font-size:15.36px;font-weight:400;color:#555;letter-spacing:-0.29px;">Skipped</div>
<svg style="position:absolute;left:197.8px;top:934.5px;" width="17.6" height="17.6" viewBox="0 0 17.6 17.6"><circle cx="8.8" cy="8.8" r="8.6" fill="#555"/><path d="M5.5 5.5L12 12M12 5.5L5.5 12" stroke="#fff" stroke-width="2"/></svg>
<div class="t" style="left:221.7px;top:935.0px;font-size:15.36px;font-weight:400;color:#555;letter-spacing:-0.29px;">Failed</div>
<div style="position:absolute;left:282.5px;top:935px;width:1.0px;height:17.5px;background:#d0d0d0"></div>
<svg style="position:absolute;left:304px;top:934px;" width="18" height="17.5" viewBox="0 0 18 17.5"><path d="M9 0.5L17.5 7.5V17.5H12V11.5H6V17.5H0.5V7.5Z" fill="#555"/></svg>
<div class="t" style="left:327.2px;top:935.0px;font-size:15.36px;font-weight:400;color:#555;letter-spacing:0.00px;">Depot</div>
<svg style="position:absolute;left:392.2px;top:934px;" width="12" height="18" viewBox="0 0 12 18"><path d="M0.5 1H11.5M0.5 17H11.5M2 1Q2 7 6 9Q10 11 10 17M10 1Q10 7 6 9Q2 11 2 17" fill="none" stroke="#555" stroke-width="1.6"/></svg>
<div class="t" style="left:413.3px;top:935.0px;font-size:15.36px;font-weight:400;color:#555;letter-spacing:-0.03px;">Wait Time</div>
<svg style="position:absolute;left:503px;top:934.5px;" width="15" height="15" viewBox="0 0 15 15"><circle cx="7.5" cy="7.5" r="6.5" fill="none" stroke="#555" stroke-width="1.6"/><path d="M7.5 4V7.5L10 9.5" fill="none" stroke="#555" stroke-width="1.5"/></svg>
<div class="t" style="left:526.0px;top:935.0px;font-size:15.36px;font-weight:400;color:#555;letter-spacing:-0.25px;">Service Time</div>
<svg style="position:absolute;left:634px;top:934.5px;" width="16" height="17" viewBox="0 0 16 17"><path d="M2 1H12V9Q12 11 10 11H4Q2 11 2 9Z" fill="#555"/><rect x="0.5" y="14.5" width="15" height="1.8" fill="#555"/></svg>
<div class="t" style="left:657.0px;top:935.0px;font-size:15.36px;font-weight:400;color:#555;letter-spacing:-0.08px;">Break Time</div>
<div style="position:absolute;left:753px;top:935px;width:1px;height:17.5px;background:#d0d0d0"></div>
<div style="position:absolute;left:774px;top:933.75px;width:33.5px;height:18.75px;border:1px solid #cfcfcf;border-radius:3px;box-sizing:border-box;background:repeating-linear-gradient(135deg,#fff 0 4px,#ededed 4px 6px)"></div>
<div class="t" style="left:813.8px;top:935.0px;font-size:15.36px;font-weight:400;color:#555;letter-spacing:-0.13px;">Out of Sequence</div>
<div style="position:absolute;left:946.9px;top:933.75px;width:34.35000000000002px;height:18.75px;border:1px dotted #b5b5b5;box-sizing:border-box;background:repeating-linear-gradient(135deg,#fff 0 4px,#ededed 4px 6px)"></div>
<div class="t" style="left:986.6px;top:935.0px;font-size:15.36px;font-weight:400;color:#555;letter-spacing:0.03px;">Actual/Predicted Time</div>
<div style="position:absolute;left:1157px;top:935px;width:1px;height:17.5px;background:#d0d0d0"></div>
<div style="position:absolute;left:1178px;top:933.75px;width:19px;height:18.75px;border:1px solid #cfcfcf;border-radius:3px;box-sizing:border-box;background:#fff"></div>
<div style="position:absolute;left:1185.5px;top:937px;width:5.0px;height:5px;background:#d62a2a;border-radius:50%"></div>
<div class="t" style="left:1202.0px;top:935.0px;font-size:15.36px;font-weight:400;color:#555;letter-spacing:-0.01px;">Missed Time Window</div>
<div style="position:absolute;left:1366.9px;top:933.75px;width:19.09999999999991px;height:18.75px;border:1px solid #cfcfcf;border-radius:3px;box-sizing:border-box;background:linear-gradient(135deg,#7cb51d 0 30%,#fff 30%)"></div>
<div class="t" style="left:1391.0px;top:935.0px;font-size:15.36px;font-weight:400;color:#555;letter-spacing:-0.04px;">Custom Colorize</div>
<div style="position:absolute;left:1557px;top:933.75px;width:19.700000000000045px;height:19.549999999999955px;border:2px solid #555;border-radius:2px;box-sizing:border-box"></div>
<div class="t" style="left:1588.7px;top:933.3px;font-size:18.26px;font-weight:400;color:#555;letter-spacing:-0.18px;">Ignore dates</div>
<div style="position:absolute;left:1723.5px;top:932px;width:1.0px;height:23px;background:#d0d0d0"></div>
<div class="t" style="left:1759.0px;top:933.3px;font-size:18.26px;font-weight:400;color:#555;letter-spacing:-0.32px;">Zoom</div>
<div style="position:absolute;left:1821px;top:924px;width:80px;height:37px;border:1px solid #e6e6e6;border-radius:5px;box-sizing:border-box"></div>
<div style="position:absolute;left:1860.5px;top:924px;width:1.0px;height:37px;background:#e6e6e6"></div>
<div style="position:absolute;left:1834px;top:942px;width:14px;height:2px;background:#555"></div>
<div style="position:absolute;left:1874px;top:942px;width:14px;height:2px;background:#555"></div>
<div style="position:absolute;left:1880px;top:936px;width:2px;height:14px;background:#555"></div>
<div style="position:absolute;left:1911.6px;top:924px;width:40.100000000000136px;height:37px;border:1px solid #e6e6e6;border-radius:5px;box-sizing:border-box"></div>
<svg style="position:absolute;left:1922.5px;top:934.5px;" width="18" height="18" viewBox="0 0 18 18"><path d="M1 5V1H5M13 1H17V5M1 13V17H5M17 13V17H13" fill="none" stroke="#555" stroke-width="1.8"/><path d="M3 3L6 6M15 3L12 6M3 15L6 12M15 15L12 12" stroke="#555" stroke-width="1.6"/></svg>
<div style="position:absolute;left:422px;top:88.5px;width:345.29999999999995px;height:851.7px;background:#fff;border-radius:5px;box-shadow:0 3px 10px rgba(0,0,0,.28),0 0 4px rgba(0,0,0,.18)"></div>
<div style="position:absolute;left:422px;top:147.5px;width:345.29999999999995px;height:1.0px;background:#e9e9e9"></div>
<div style="position:absolute;left:422px;top:497.5px;width:345.29999999999995px;height:1.0px;background:#e9e9e9"></div>
<div style="position:absolute;left:422px;top:599.4px;width:345.29999999999995px;height:1.0px;background:#e9e9e9"></div>
<div style="position:absolute;left:422px;top:784.3px;width:345.29999999999995px;height:1.0px;background:#e9e9e9"></div>
<div style="position:absolute;left:422px;top:887.3px;width:345.29999999999995px;height:1.0px;background:#e9e9e9"></div>
<div class="t" style="left:470.5px;top:105.8px;font-size:18.41px;font-weight:400;color:#474747;letter-spacing:0.00px;">Edit</div>
<div class="t" style="left:470.5px;top:169.0px;font-size:18.41px;font-weight:400;color:#474747;letter-spacing:0.00px;">Rename</div>
<div class="t" style="left:470.5px;top:209.7px;font-size:18.41px;font-weight:400;color:#474747;letter-spacing:0.00px;">Assign User</div>
<div class="t" style="left:470.5px;top:250.4px;font-size:18.41px;font-weight:400;color:#474747;letter-spacing:0.00px;">Assign Vehicle</div>
<div class="t" style="left:470.5px;top:291.2px;font-size:18.41px;font-weight:400;color:#474747;letter-spacing:0.00px;">Assign Facility</div>
<div class="t" style="left:470.5px;top:332.4px;font-size:18.41px;font-weight:400;color:#474747;letter-spacing:-0.01px;">Assign Customer</div>
<div class="t" style="left:470.5px;top:373.4px;font-size:18.41px;font-weight:400;color:#474747;letter-spacing:0.00px;">Assign Contract</div>
<div class="t" style="left:470.5px;top:413.8px;font-size:18.41px;font-weight:400;color:#474747;letter-spacing:0.00px;">Reschedule</div>
<div class="t" style="left:470.5px;top:455.0px;font-size:18.41px;font-weight:400;color:#474747;letter-spacing:0.00px;">Dispatch</div>
<div class="t" style="left:470.5px;top:517.2px;font-size:18.41px;font-weight:400;color:#474747;letter-spacing:0.00px;">Duplicate</div>
<div class="t" style="left:470.5px;top:558.2px;font-size:18.41px;font-weight:400;color:#474747;letter-spacing:0.00px;">Create Recurring Route</div>
<div class="t" style="left:470.5px;top:620.0px;font-size:18.41px;font-weight:400;color:#474747;letter-spacing:0.00px;">View Manifest</div>
<div class="t" style="left:470.5px;top:661.4px;font-size:18.41px;font-weight:400;color:#474747;letter-spacing:0.00px;">View on Multiple Routes Map</div>
<div class="t" style="left:470.5px;top:702.0px;font-size:18.41px;font-weight:400;color:#474747;letter-spacing:0.00px;">Share</div>
<div class="t" style="left:470.5px;top:743.6px;font-size:18.41px;font-weight:400;color:#474747;letter-spacing:0.00px;">Export Routes</div>
<div class="t" style="left:470.5px;top:805.2px;font-size:18.41px;font-weight:400;color:#474747;letter-spacing:0.00px;">Insert Address</div>
<div class="t" style="left:470.5px;top:846.4px;font-size:18.41px;font-weight:400;color:#474747;letter-spacing:0.00px;">Insert Breaks</div>
<div class="t" style="left:470.5px;top:908.0px;font-size:18.41px;font-weight:400;color:#474747;letter-spacing:0.00px;">Remove</div>
<svg style="position:absolute;left:432px;top:100px;" width="30" height="30" viewBox="0 0 30 30"><path d="M5.3 21.8L7.6 13.2Q8.8 10.8 11 11.4Q12.6 12 12.7 15.5Q13 19.3 15.6 18.6Q17.6 17.8 18.4 13.5L19.3 9" fill="none" stroke="#545454" stroke-width="3.1" stroke-linecap="round" stroke-linejoin="round"/><path d="M20.2 4.6L15.6 9.6H23.6Z" fill="#545454" stroke="#545454" stroke-width="0.8" stroke-linejoin="round"/><path d="M13.6 25.6L21.8 17.6" stroke="#fff" stroke-width="6.4" stroke-linecap="round"/><path d="M13.6 25.6L21.8 17.6" stroke="#545454" stroke-width="3.9" stroke-linecap="round"/><path d="M24.3 14.6L25.6 15.8" stroke="#545454" stroke-width="3.4" stroke-linecap="round"/></svg>
<svg style="position:absolute;left:438px;top:170px;" width="18" height="18" viewBox="0 0 18 18"><path d="M2 16L1.2 13.5 11.5 3.2 14.8 6.5 4.5 16.8Z" fill="#545454"/><path d="M12.8 1.9L14.2 0.5Q15 -0.2 15.8 0.5L17.5 2.2Q18.2 3 17.5 3.8L16.1 5.2Z" fill="#545454"/></svg>
<svg style="position:absolute;left:438px;top:210px;" width="18" height="18" viewBox="0 0 18 18"><circle cx="9" cy="5" r="4.6" fill="#545454"/><path d="M0.2 17.3Q0.5 11.3 9 11.3Q17.5 11.3 17.8 17.3Z" fill="#545454"/></svg>
<svg style="position:absolute;left:437px;top:252px;" width="20" height="18" viewBox="0 0 20 18"><path d="M3.5 1.5Q4 0.3 5.5 0.3H14.5Q16 0.3 16.5 1.5L18.6 7.5Q19.8 8.5 19.8 10V15.5Q19.8 17.3 18.5 17.3H16.5Q15.5 17.3 15.5 15.8V14.8H4.5V15.8Q4.5 17.3 3.5 17.3H1.5Q0.2 17.3 0.2 15.5V10Q0.2 8.5 1.4 7.5Z" fill="#545454"/><path d="M4.3 7.2L5.6 2.8H14.4L15.7 7.2Z" fill="#fff"/><circle cx="3.8" cy="11" r="1.6" fill="#fff"/><circle cx="16.2" cy="11" r="1.6" fill="#fff"/></svg>
<svg style="position:absolute;left:436.5px;top:292.5px;" width="22" height="20" viewBox="0 0 22 20"><rect x="0.3" y="0.3" width="15.5" height="19" fill="#545454"/><rect x="2.2" y="3" width="2.6" height="2.6" fill="#fff"/><rect x="2.2" y="8" width="2.6" height="2.6" fill="#fff"/><rect x="2.2" y="13" width="2.6" height="2.6" fill="#fff"/><rect x="6.8" y="3" width="2.6" height="2.6" fill="#fff"/><rect x="6.8" y="8" width="2.6" height="2.6" fill="#fff"/><rect x="6.8" y="13" width="2.6" height="2.6" fill="#fff"/><rect x="11.399999999999999" y="3" width="2.6" height="2.6" fill="#fff"/><rect x="11.399999999999999" y="8" width="2.6" height="2.6" fill="#fff"/><rect x="11.399999999999999" y="13" width="2.6" height="2.6" fill="#fff"/><rect x="11" y="12" width="11" height="8" fill="#fff"/><path d="M13 15.5L15.3 17.8 20.5 13" fill="none" stroke="#545454" stroke-width="1.6"/><rect x="11" y="13" width="1.2" height="7" fill="#545454"/></svg>
<svg style="position:absolute;left:437px;top:332px;" width="19" height="20" viewBox="0 0 19 20"><rect x="2.8" y="1" width="15" height="18" rx="1.5" fill="none" stroke="#545454" stroke-width="2"/><path d="M5 1V19" stroke="#545454" stroke-width="1.5"/><path d="M10.5 1.5V7.5L12.5 6 14.5 7.5V1.5" fill="#545454"/><circle cx="1.5" cy="4.5" r="1.3" fill="#545454"/><circle cx="1.5" cy="10" r="1.3" fill="#545454"/><circle cx="1.5" cy="15.5" r="1.3" fill="#545454"/></svg>
<svg style="position:absolute;left:436px;top:373.5px;" width="23" height="21" viewBox="0 0 23 21"><path d="M15 7V2Q15 1 14 1H2Q1 1 1 2V19Q1 20 2 20H14.5" fill="none" stroke="#545454" stroke-width="2"/><path d="M4 5H11M4 8.5H9" stroke="#545454" stroke-width="1.8"/><path d="M4 16L5.5 13 6.5 15.5 7.5 14" fill="none" stroke="#545454" stroke-width="1.3"/><path d="M9.5 17L10 14.5 19 5.5 21 7.5 12 16.5Z" fill="#545454"/><path d="M19.8 4.7L20.5 4 22.5 6 21.8 6.7Z" fill="#545454"/></svg>
<svg style="position:absolute;left:436px;top:413px;" width="22" height="22" viewBox="0 0 22 22"><circle cx="11" cy="11" r="9.6" fill="none" stroke="#545454" stroke-width="2"/><path d="M10.6 5.5V11.2L14.5 14.6" fill="none" stroke="#545454" stroke-width="2"/></svg>
<svg style="position:absolute;left:436px;top:454px;" width="22" height="22" viewBox="0 0 22 22"><path d="M17.3 4.3A9.6 9.6 0 1 0 20.4 9.5" fill="none" stroke="#545454" stroke-width="2"/><path d="M6.3 10.6L10.2 14.3 19 5.5" fill="none" stroke="#545454" stroke-width="2.2"/></svg>
<svg style="position:absolute;left:436px;top:515.5px;" width="21.5" height="23.5" viewBox="0 0 21.5 23.5"><path d="M1.2 17V1.2H13" fill="none" stroke="#545454" stroke-width="2"/><path d="M5.5 5Q5.5 4 6.5 4H14L20.5 10.5V21.5Q20.5 22.8 19.3 22.8H6.7Q5.5 22.8 5.5 21.5Z" fill="#545454"/><path d="M14 4.5V10.5H20" fill="#fff"/></svg>
<svg style="position:absolute;left:436.5px;top:557px;" width="21" height="21" viewBox="0 0 21 21"><path d="M17.3 5A9 9 0 1 0 19.5 12" fill="none" stroke="#545454" stroke-width="2"/><path d="M14.5 4.5L19.3 1.5 19.5 7.8Z" fill="#545454"/><path d="M10 6V11L13 13.5" fill="none" stroke="#545454" stroke-width="1.8"/></svg>
<svg style="position:absolute;left:436px;top:620.5px;" width="22" height="19.5" viewBox="0 0 22 19.5"><rect x="4.5" y="0.5" width="13" height="4.5" fill="#545454"/><path d="M0.5 8.5Q0.5 6.3 2.7 6.3H19.3Q21.5 6.3 21.5 8.5V15.5H17.5V11.5H4.5V15.5H0.5Z" fill="#545454"/><rect x="5.7" y="12.5" width="10.6" height="6.3" fill="none" stroke="#545454" stroke-width="1.6"/><circle cx="18.3" cy="9" r="1" fill="#fff"/></svg>
<svg style="position:absolute;left:437.5px;top:662px;" width="19.5" height="20" viewBox="0 0 19.5 20"><path d="M0.3 2.5L6 0.3 13 2.5 19.2 0.3V17.5L13 19.8 6 17.5 0.3 19.8Z" fill="#545454"/><path d="M6.3 2.8L12.7 4.7V17.5L6.3 15.5Z" fill="#fff"/></svg>
<svg style="position:absolute;left:437px;top:702.5px;" width="20" height="20" viewBox="0 0 20 20"><circle cx="3.3" cy="10" r="3" fill="#545454"/><circle cx="16.5" cy="3" r="3" fill="#545454"/><circle cx="16.5" cy="17" r="3" fill="#545454"/><path d="M3.3 10L16.5 3M3.3 10L16.5 17" stroke="#545454" stroke-width="1.9"/></svg>
<svg style="position:absolute;left:439px;top:743px;" width="16" height="19" viewBox="0 0 16 19"><path d="M4.5 0.5H11.5V6.5H15.3L8 13.8 0.7 6.5H4.5Z" fill="#545454"/><rect x="0.3" y="16.8" width="15.4" height="2" fill="#545454"/></svg>
<svg style="position:absolute;left:434px;top:800px;" width="30" height="30" viewBox="0 0 30 30"><circle cx="12.4" cy="12.7" r="6.5" fill="none" stroke="#545454" stroke-width="3"/><path d="M7.2 16.8L12.4 25.2 16.3 18.6Z" fill="#545454"/><circle cx="20.6" cy="22.9" r="5.6" fill="#fff"/><path d="M20.6 19.2V26.7M16.9 22.9H24.3" stroke="#545454" stroke-width="2.2"/></svg>
<svg style="position:absolute;left:436px;top:840.5px;" width="21" height="26" viewBox="0 0 21 26"><path d="M3 2.5H16.5V13.5Q16.5 16.5 13.5 16.5H6Q3 16.5 3 13.5Z" fill="#545454"/><path d="M16.5 2.5H19Q20.5 2.5 20.5 4V7Q20.5 8.5 19 8.5H16.5" fill="none" stroke="#545454" stroke-width="1.8"/><rect x="0.3" y="22.8" width="20" height="2.2" fill="#545454"/></svg>
<svg style="position:absolute;left:439.5px;top:908.5px;" width="15" height="19.5" viewBox="0 0 15 19.5"><path d="M0 3Q0.5 1.3 5 1.3Q5 0 7.5 0Q10 0 10 1.3Q14.5 1.3 15 3Z" fill="#545454"/><path d="M1.3 4.5H13.7V17.8Q13.7 19.3 12.2 19.3H2.8Q1.3 19.3 1.3 17.8Z" fill="#545454"/></svg>
<svg style="position:absolute;left:736px;top:748px;" width="6" height="10" viewBox="0 0 6 10"><path d="M0.5 0.5L5.5 5 0.5 9.5Z" fill="#545454"/></svg>
<div style="position:absolute;left:1005px;top:153.7px;width:531.3px;height:100.60000000000002px;background:#fff;border-radius:5px;box-shadow:0 3px 12px rgba(0,0,0,.28),0 0 2px rgba(0,0,0,.12)"></div>
<div class="t" style="left:1056.4px;top:172.8px;font-size:19.13px;font-weight:400;color:#3d3d3d;letter-spacing:-0.07px;">Insert Address into Best Route</div>
<div class="t" style="left:1056.4px;top:214.3px;font-size:19.13px;font-weight:400;color:#3d3d3d;letter-spacing:0.02px;">Operation Matrix With Routes Scheduled for Today</div>
<svg style="position:absolute;left:1018.5px;top:169.6px;" width="30" height="30" viewBox="0 0 30 30"><circle cx="12.4" cy="12.7" r="6.5" fill="none" stroke="#545454" stroke-width="3"/><path d="M7.2 16.8L12.4 25.2 16.3 18.6Z" fill="#545454"/><circle cx="20.6" cy="22.9" r="5.6" fill="#fff"/><path d="M20.6 19.2V26.7M16.9 22.9H24.3" stroke="#545454" stroke-width="2.2"/></svg>
<svg style="position:absolute;left:1023px;top:215px;" width="21" height="21" viewBox="0 0 21 21"><rect x="0" y="0" width="9.3" height="9.3" fill="#545454"/><rect x="11.2" y="0" width="9.3" height="9.3" fill="#545454"/><rect x="0" y="11.2" width="9.3" height="9.3" fill="#545454"/><rect x="11.2" y="11.2" width="9.3" height="9.3" fill="#545454"/></svg>
<svg style="position:absolute;left:1014px;top:73px;" width="130" height="78" viewBox="0 0 130 78"><path d="M4 17.5H83V4.5Q83 1 86 3.5L127 38.5Q128.5 39.5 127 41L86 74Q83 76.5 83 73V60H4Q2 60 2 58V19.5Q2 17.5 4 17.5Z" fill="#1a78e3"/></svg>
<svg style="position:absolute;left:337px;top:216px;" width="78" height="130" viewBox="0 0 78 130"><path d="M19.5 2H57Q60 2 60 5V83H74Q76.5 83 74.5 86L41 126.5Q39.5 128 38 126.5L3.5 86Q1.5 83 4 83H18V4Q18 2 19.5 2Z" fill="#f04a2d"/></svg>
<svg style="position:absolute;left:198px;top:651px;" width="78" height="130" viewBox="0 0 78 130"><path d="M19.5 2H58Q61 2 61 5V83H74Q77 83 75 86L41 126.5Q39.5 128 38 126.5L3.5 86Q1.5 83 4 83H17V4Q17 2 19.5 2Z" fill="#f04a2d"/></svg>
</body></html>
